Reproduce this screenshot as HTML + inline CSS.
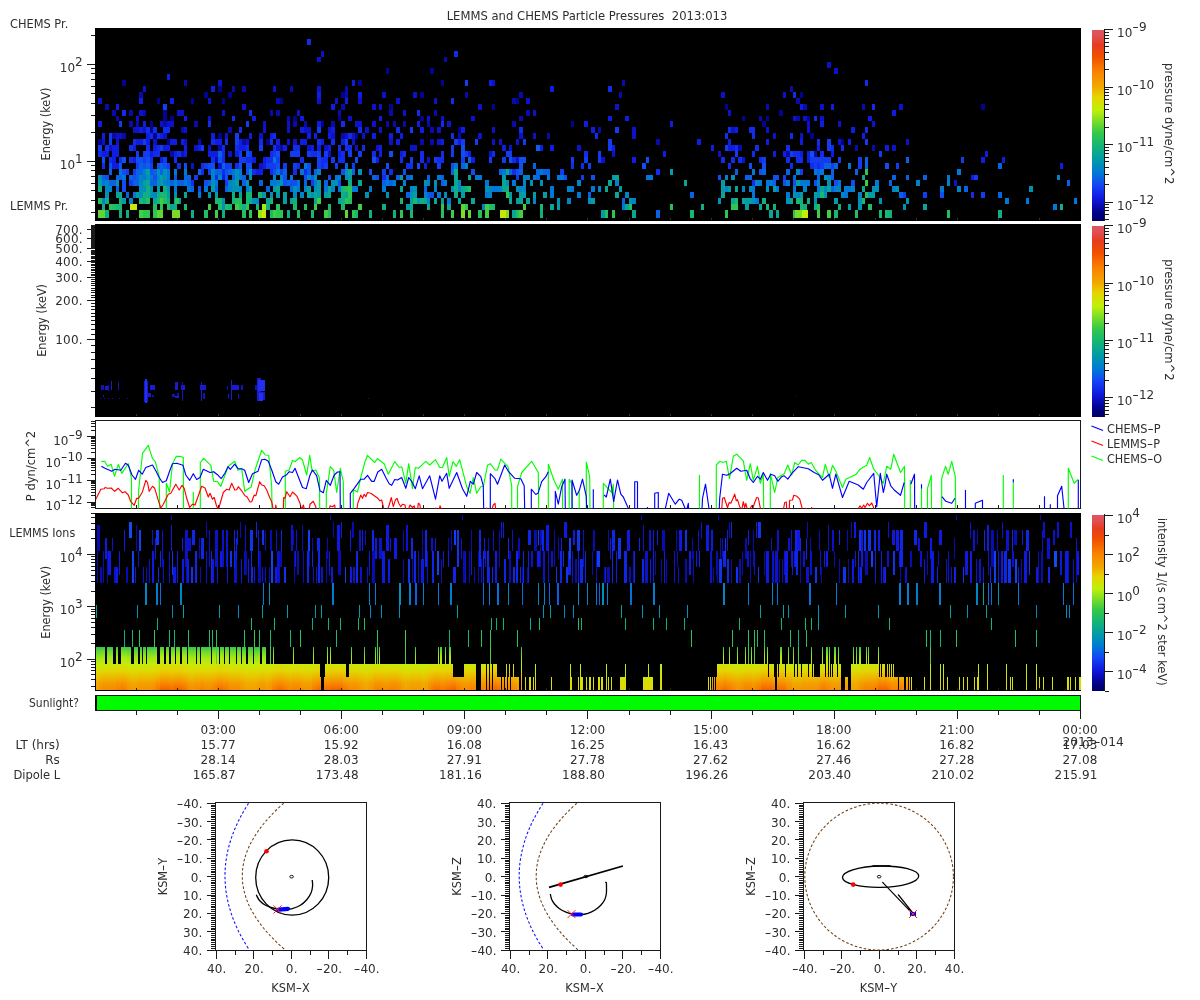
<!DOCTYPE html><html><head><meta charset="utf-8"><title>LEMMS and CHEMS Particle Pressures</title><style>html,body{margin:0;padding:0;background:#fff}svg{display:block;will-change:transform}</style></head><body><svg width="1200" height="1000" viewBox="0 0 1200 1000" font-family="'DejaVu Sans','Liberation Sans',sans-serif" shape-rendering="crispEdges">
<rect width="1200" height="1000" fill="#fff"/>
<defs><linearGradient id="cb" x1="0" y1="1" x2="0" y2="0"><stop offset="0.0" stop-color="#000064"/><stop offset="0.03" stop-color="#00007d"/><stop offset="0.06" stop-color="#05059b"/><stop offset="0.12" stop-color="#0f19e1"/><stop offset="0.19" stop-color="#1446f5"/><stop offset="0.25" stop-color="#0078d7"/><stop offset="0.31" stop-color="#0096af"/><stop offset="0.39" stop-color="#14b478"/><stop offset="0.46" stop-color="#32c84b"/><stop offset="0.52" stop-color="#78dc28"/><stop offset="0.58" stop-color="#bef00a"/><stop offset="0.65" stop-color="#e6d400"/><stop offset="0.7" stop-color="#f0aa00"/><stop offset="0.78" stop-color="#fa8200"/><stop offset="0.86" stop-color="#f05000"/><stop offset="0.92" stop-color="#e63c1e"/><stop offset="0.97" stop-color="#e05055"/><stop offset="1.0" stop-color="#de555f"/></linearGradient></defs>
<text transform="translate(587 20) scale(0.968 1)" font-size="12" text-anchor="middle" fill="#2e2e2e">LEMMS and CHEMS Particle Pressures &#160;2013:013</text>
<rect x="95" y="28" width="986" height="193" fill="#000"/>
<path d="M98 139h4v6h-4zM122 80h4v6h-4zM150 127h3v6h-3zM150 121h3v6h-3zM153 133h4v6h-4zM157 98h3v6h-3zM163 116h4v5h-4zM163 110h4v6h-4zM167 139h3v6h-3zM170 116h4v5h-4zM191 98h3v6h-3zM204 92h4v6h-4zM218 133h4v6h-4zM218 86h4v6h-4zM222 98h3v6h-3zM228 92h4v6h-4zM266 139h4v6h-4zM280 98h3v6h-3zM293 116h4v5h-4zM321 121h3v6h-3zM338 116h3v5h-3zM341 92h4v6h-4zM355 133h3v6h-3zM358 80h4v6h-4zM386 68h3v6h-3zM389 104h4v6h-4zM420 116h4v5h-4zM420 92h4v6h-4zM430 68h4v6h-4zM441 80h3v6h-3zM458 127h3v6h-3zM492 104h3v6h-3zM516 98h3v6h-3zM571 121h3v6h-3zM725 104h3v6h-3zM742 116h3v5h-3zM762 121h4v6h-4zM766 116h3v5h-3zM779 110h4v6h-4zM800 92h3v6h-3zM807 116h3v5h-3zM810 133h4v6h-4zM841 139h3v6h-3zM981 104h4v6h-4z" fill="#030391"/><path d="M105 104h4v6h-4zM112 133h4v6h-4zM112 110h4v6h-4zM116 116h3v5h-3zM122 133h4v6h-4zM129 121h4v6h-4zM129 110h4v6h-4zM136 121h3v6h-3zM139 92h4v6h-4zM143 110h3v6h-3zM163 121h4v6h-4zM170 151h4v6h-4zM181 127h3v6h-3zM184 80h3v6h-3zM194 121h4v6h-4zM198 139h3v6h-3zM215 157h3v6h-3zM218 145h4v6h-4zM228 127h4v6h-4zM232 86h3v6h-3zM242 139h4v6h-4zM242 86h4v6h-4zM270 110h3v6h-3zM276 110h4v6h-4zM276 98h4v6h-4zM280 145h3v6h-3zM287 116h3v5h-3zM290 86h3v6h-3zM293 121h4v6h-4zM304 121h3v6h-3zM331 121h4v6h-4zM338 110h3v6h-3zM341 133h4v6h-4zM341 104h4v6h-4zM345 92h3v6h-3zM345 86h3v6h-3zM386 121h3v6h-3zM389 110h4v6h-4zM393 121h3v6h-3zM403 121h3v6h-3zM420 139h4v6h-4zM427 121h3v6h-3zM430 139h4v6h-4zM430 127h4v6h-4zM434 110h3v6h-3zM444 57h3v5h-3zM458 133h3v6h-3zM465 92h3v6h-3zM512 121h4v6h-4zM512 98h4v6h-4zM519 116h4v5h-4zM519 92h4v6h-4zM526 110h4v6h-4zM547 133h3v6h-3zM598 127h3v6h-3zM619 92h3v6h-3zM622 80h3v6h-3zM656 139h4v6h-4zM738 145h4v6h-4zM759 116h3v5h-3zM766 104h3v6h-3zM786 151h4v6h-4zM790 86h3v6h-3zM796 116h4v5h-4zM796 98h4v6h-4zM803 104h4v6h-4zM814 151h3v6h-3zM855 145h3v6h-3zM862 104h3v6h-3zM872 145h3v6h-3z" fill="#080aac"/><path d="M98 98h4v6h-4zM102 139h3v6h-3zM109 145h3v6h-3zM116 139h3v6h-3zM116 133h3v6h-3zM119 133h3v6h-3zM133 127h3v6h-3zM136 127h3v6h-3zM136 116h3v5h-3zM139 110h4v6h-4zM143 127h3v6h-3zM143 86h3v6h-3zM153 139h4v6h-4zM160 121h3v6h-3zM163 133h4v6h-4zM167 121h3v6h-3zM170 121h4v6h-4zM177 110h4v6h-4zM181 151h3v6h-3zM181 110h3v6h-3zM184 139h3v6h-3zM184 127h3v6h-3zM191 163h3v6h-3zM194 145h4v6h-4zM208 145h3v6h-3zM208 116h3v5h-3zM208 98h3v6h-3zM218 163h4v6h-4zM218 80h4v6h-4zM222 110h3v6h-3zM225 133h3v6h-3zM228 151h4v6h-4zM242 104h4v6h-4zM246 139h3v6h-3zM259 163h4v6h-4zM259 133h4v6h-4zM263 127h3v6h-3zM263 121h3v6h-3zM273 86h3v6h-3zM276 145h4v6h-4zM287 139h3v6h-3zM287 127h3v6h-3zM287 121h3v6h-3zM293 139h4v6h-4zM297 110h3v6h-3zM304 127h3v6h-3zM307 145h4v6h-4zM307 127h4v6h-4zM317 98h4v6h-4zM317 86h4v6h-4zM317 57h4v5h-4zM321 51h3v6h-3zM324 145h4v6h-4zM328 151h3v6h-3zM328 127h3v6h-3zM331 133h4v6h-4zM335 98h3v6h-3zM345 133h3v6h-3zM348 116h4v5h-4zM352 139h3v6h-3zM352 133h3v6h-3zM355 145h3v6h-3zM355 121h3v6h-3zM358 121h4v6h-4zM358 98h4v6h-4zM362 133h3v6h-3zM365 127h4v6h-4zM372 121h4v6h-4zM372 104h4v6h-4zM376 145h3v6h-3zM379 127h3v6h-3zM379 104h3v6h-3zM382 92h4v6h-4zM389 139h4v6h-4zM396 98h4v6h-4zM403 110h3v6h-3zM410 145h3v6h-3zM413 145h4v6h-4zM413 92h4v6h-4zM427 157h3v6h-3zM427 116h3v5h-3zM434 98h3v6h-3zM437 139h4v6h-4zM437 127h4v6h-4zM441 116h3v5h-3zM447 121h4v6h-4zM471 116h4v5h-4zM478 133h4v6h-4zM478 104h4v6h-4zM489 151h3v6h-3zM492 139h3v6h-3zM492 127h3v6h-3zM492 80h3v6h-3zM499 139h3v6h-3zM509 145h3v6h-3zM516 157h3v6h-3zM516 139h3v6h-3zM519 133h4v6h-4zM526 98h4v6h-4zM533 133h3v6h-3zM533 110h3v6h-3zM577 145h4v6h-4zM601 157h4v6h-4zM612 151h3v6h-3zM615 104h4v6h-4zM632 133h4v6h-4zM632 127h4v6h-4zM718 151h3v6h-3zM721 92h4v6h-4zM728 110h3v6h-3zM731 127h4v6h-4zM742 157h3v6h-3zM766 127h3v6h-3zM773 133h3v6h-3zM783 92h3v6h-3zM793 116h3v5h-3zM800 133h3v6h-3zM803 116h4v5h-4zM807 127h3v6h-3zM807 121h3v6h-3zM820 116h4v5h-4zM820 104h4v6h-4zM827 62h4v6h-4zM834 68h4v6h-4zM838 139h3v6h-3zM838 121h3v6h-3zM872 121h3v6h-3zM892 145h4v6h-4zM899 104h4v6h-4zM906 139h3v6h-3zM954 180h3v6h-3z" fill="#0c12ca"/><path d="M98 121h4v6h-4zM102 151h3v6h-3zM102 133h3v6h-3zM105 151h4v6h-4zM112 163h4v6h-4zM112 157h4v6h-4zM112 151h4v6h-4zM112 145h4v6h-4zM116 163h3v6h-3zM116 151h3v6h-3zM116 145h3v6h-3zM116 104h3v6h-3zM133 157h3v6h-3zM133 145h3v6h-3zM136 139h3v6h-3zM139 139h4v6h-4zM139 127h4v6h-4zM139 98h4v6h-4zM143 121h3v6h-3zM146 139h4v6h-4zM146 133h4v6h-4zM150 151h3v6h-3zM153 145h4v6h-4zM160 157h3v6h-3zM160 133h3v6h-3zM163 145h4v6h-4zM167 145h3v6h-3zM167 74h3v6h-3zM170 139h4v6h-4zM170 98h4v6h-4zM174 151h3v6h-3zM174 139h3v6h-3zM181 139h3v6h-3zM184 151h3v6h-3zM184 145h3v6h-3zM184 116h3v5h-3zM198 145h3v6h-3zM208 151h3v6h-3zM211 151h4v6h-4zM211 133h4v6h-4zM211 86h4v6h-4zM215 151h3v6h-3zM215 139h3v6h-3zM218 139h4v6h-4zM222 175h3v5h-3zM235 151h4v6h-4zM239 145h3v6h-3zM239 139h3v6h-3zM242 145h4v6h-4zM249 133h3v6h-3zM252 157h4v6h-4zM252 116h4v5h-4zM256 169h3v6h-3zM259 169h4v6h-4zM263 163h3v6h-3zM263 157h3v6h-3zM270 133h3v6h-3zM276 139h4v6h-4zM283 145h4v6h-4zM300 139h4v6h-4zM300 127h4v6h-4zM300 116h4v5h-4zM304 139h3v6h-3zM307 133h4v6h-4zM311 145h3v6h-3zM314 133h3v6h-3zM317 145h4v6h-4zM317 121h4v6h-4zM317 92h4v6h-4zM321 139h3v6h-3zM328 145h3v6h-3zM328 133h3v6h-3zM331 127h4v6h-4zM331 104h4v6h-4zM338 151h3v6h-3zM341 139h4v6h-4zM345 98h3v6h-3zM352 80h3v6h-3zM358 92h4v6h-4zM372 133h4v6h-4zM376 157h3v6h-3zM379 151h3v6h-3zM379 145h3v6h-3zM379 116h3v5h-3zM389 133h4v6h-4zM396 139h4v6h-4zM400 151h3v6h-3zM400 133h3v6h-3zM417 121h3v6h-3zM420 127h4v6h-4zM424 163h3v6h-3zM441 139h3v6h-3zM458 139h3v6h-3zM461 127h4v6h-4zM468 151h3v6h-3zM471 157h4v6h-4zM489 80h3v6h-3zM502 145h4v6h-4zM540 145h3v6h-3zM550 145h4v6h-4zM550 86h4v6h-4zM584 121h4v6h-4zM591 127h4v6h-4zM608 116h4v5h-4zM612 145h3v6h-3zM625 116h4v5h-4zM632 157h4v6h-4zM663 151h3v6h-3zM670 121h3v6h-3zM697 139h4v6h-4zM711 145h3v6h-3zM728 145h3v6h-3zM728 139h3v6h-3zM731 145h4v6h-4zM735 127h3v6h-3zM766 139h3v6h-3zM773 151h3v6h-3zM783 151h3v6h-3zM800 151h3v6h-3zM800 139h3v6h-3zM800 104h3v6h-3zM807 157h3v6h-3zM807 151h3v6h-3zM817 145h3v6h-3zM820 121h4v6h-4zM831 151h3v6h-3zM831 104h3v6h-3zM848 139h3v6h-3zM851 127h4v6h-4zM862 133h3v6h-3zM868 116h4v5h-4zM885 145h4v6h-4zM892 110h4v6h-4zM971 175h3v5h-3zM981 157h4v6h-4zM985 151h3v6h-3zM1002 157h3v6h-3zM1060 163h3v6h-3z" fill="#0f1ce2"/><path d="M98 151h4v6h-4zM102 163h3v6h-3zM105 145h4v6h-4zM109 157h3v6h-3zM119 157h3v6h-3zM122 110h4v6h-4zM129 157h4v6h-4zM129 145h4v6h-4zM133 139h3v6h-3zM146 145h4v6h-4zM146 127h4v6h-4zM150 157h3v6h-3zM150 133h3v6h-3zM153 151h4v6h-4zM153 127h4v6h-4zM157 151h3v6h-3zM157 145h3v6h-3zM157 133h3v6h-3zM163 127h4v6h-4zM167 127h3v6h-3zM174 157h3v6h-3zM177 163h4v6h-4zM177 151h4v6h-4zM191 180h3v6h-3zM201 169h3v6h-3zM201 163h3v6h-3zM208 121h3v6h-3zM211 157h4v6h-4zM211 139h4v6h-4zM215 175h3v5h-3zM222 169h3v6h-3zM222 157h3v6h-3zM222 151h3v6h-3zM222 145h3v6h-3zM225 139h3v6h-3zM232 116h3v5h-3zM235 163h4v6h-4zM235 145h4v6h-4zM239 127h3v6h-3zM246 157h3v6h-3zM246 145h3v6h-3zM249 157h3v6h-3zM249 110h3v6h-3zM252 169h4v6h-4zM259 139h4v6h-4zM266 157h4v6h-4zM270 169h3v6h-3zM270 157h3v6h-3zM270 151h3v6h-3zM270 139h3v6h-3zM273 145h3v6h-3zM273 133h3v6h-3zM293 169h4v6h-4zM293 145h4v6h-4zM297 163h3v6h-3zM297 145h3v6h-3zM300 157h4v6h-4zM304 169h3v6h-3zM307 39h4v6h-4zM311 151h3v6h-3zM314 151h3v6h-3zM317 139h4v6h-4zM321 163h3v6h-3zM321 157h3v6h-3zM324 157h4v6h-4zM331 139h4v6h-4zM338 157h3v6h-3zM338 145h3v6h-3zM341 157h4v6h-4zM341 151h4v6h-4zM341 121h4v6h-4zM345 145h3v6h-3zM348 145h4v6h-4zM348 133h4v6h-4zM358 127h4v6h-4zM362 145h3v6h-3zM372 151h4v6h-4zM382 175h4v5h-4zM389 169h4v6h-4zM396 127h4v6h-4zM400 157h3v6h-3zM403 151h3v6h-3zM406 163h4v6h-4zM410 163h3v6h-3zM417 110h3v6h-3zM420 157h4v6h-4zM420 151h4v6h-4zM437 157h4v6h-4zM441 157h3v6h-3zM441 151h3v6h-3zM441 121h3v6h-3zM451 133h3v6h-3zM451 98h3v6h-3zM454 51h4v6h-4zM492 151h3v6h-3zM512 169h4v6h-4zM512 157h4v6h-4zM519 127h4v6h-4zM571 163h3v6h-3zM581 163h3v6h-3zM584 151h4v6h-4zM595 133h3v6h-3zM608 86h4v6h-4zM656 169h4v6h-4zM721 157h4v6h-4zM725 133h3v6h-3zM728 163h3v6h-3zM728 127h3v6h-3zM731 157h4v6h-4zM735 145h3v6h-3zM738 157h4v6h-4zM749 127h3v6h-3zM752 180h3v6h-3zM752 151h3v6h-3zM752 133h3v6h-3zM752 127h3v6h-3zM755 145h4v6h-4zM759 157h3v6h-3zM786 157h4v6h-4zM786 145h4v6h-4zM790 163h3v6h-3zM790 133h3v6h-3zM793 151h3v6h-3zM793 92h3v6h-3zM796 157h4v6h-4zM796 151h4v6h-4zM800 157h3v6h-3zM810 163h4v6h-4zM814 116h3v5h-3zM817 163h3v6h-3zM817 139h3v6h-3zM820 151h4v6h-4zM831 145h3v6h-3zM841 145h3v6h-3zM865 127h3v6h-3zM865 80h3v6h-3zM872 104h3v6h-3zM971 192h3v6h-3z" fill="#112cea"/><path d="M98 145h4v6h-4zM109 139h3v6h-3zM109 133h3v6h-3zM119 121h3v6h-3zM126 169h3v6h-3zM129 180h4v6h-4zM133 169h3v6h-3zM136 163h3v6h-3zM136 151h3v6h-3zM143 157h3v6h-3zM143 151h3v6h-3zM143 139h3v6h-3zM146 151h4v6h-4zM150 163h3v6h-3zM160 145h3v6h-3zM163 157h4v6h-4zM163 104h4v6h-4zM167 163h3v6h-3zM194 175h4v5h-4zM201 145h3v6h-3zM204 163h4v6h-4zM208 169h3v6h-3zM225 180h3v6h-3zM225 163h3v6h-3zM228 163h4v6h-4zM235 139h4v6h-4zM235 133h4v6h-4zM239 157h3v6h-3zM239 151h3v6h-3zM242 157h4v6h-4zM246 121h3v6h-3zM249 151h3v6h-3zM259 145h4v6h-4zM266 163h4v6h-4zM270 163h3v6h-3zM273 163h3v6h-3zM273 151h3v6h-3zM276 157h4v6h-4zM280 169h3v6h-3zM283 163h4v6h-4zM290 151h3v6h-3zM293 163h4v6h-4zM293 151h4v6h-4zM297 151h3v6h-3zM307 151h4v6h-4zM311 180h3v6h-3zM317 163h4v6h-4zM317 157h4v6h-4zM317 151h4v6h-4zM317 127h4v6h-4zM324 163h4v6h-4zM324 151h4v6h-4zM331 157h4v6h-4zM335 163h3v6h-3zM345 139h3v6h-3zM348 151h4v6h-4zM352 163h3v6h-3zM358 151h4v6h-4zM382 169h4v6h-4zM410 157h3v6h-3zM410 127h3v6h-3zM434 157h3v6h-3zM437 163h4v6h-4zM451 151h3v6h-3zM451 145h3v6h-3zM454 139h4v6h-4zM461 157h4v6h-4zM461 139h4v6h-4zM465 151h3v6h-3zM465 80h3v6h-3zM475 139h3v6h-3zM489 157h3v6h-3zM502 157h4v6h-4zM506 151h3v6h-3zM509 151h3v6h-3zM516 175h3v5h-3zM523 139h3v6h-3zM560 169h4v6h-4zM571 157h3v6h-3zM581 175h3v5h-3zM584 157h4v6h-4zM588 163h3v6h-3zM598 157h3v6h-3zM598 151h3v6h-3zM608 145h4v6h-4zM608 139h4v6h-4zM615 127h4v6h-4zM725 145h3v6h-3zM735 151h3v6h-3zM762 157h4v6h-4zM783 175h3v5h-3zM790 151h3v6h-3zM800 169h3v6h-3zM810 157h4v6h-4zM814 163h3v6h-3zM814 157h3v6h-3zM817 157h3v6h-3zM820 163h4v6h-4zM820 157h4v6h-4zM824 157h3v6h-3zM827 157h4v6h-4zM827 145h4v6h-4zM827 139h4v6h-4zM831 163h3v6h-3zM838 157h3v6h-3zM858 163h4v6h-4zM858 157h4v6h-4zM865 139h3v6h-3zM879 151h3v6h-3zM896 163h3v6h-3zM903 192h3v6h-3zM923 192h4v6h-4zM961 157h3v6h-3zM974 175h4v5h-4zM981 192h4v6h-4z" fill="#133cf1"/><path d="M102 157h3v6h-3zM105 175h4v5h-4zM109 163h3v6h-3zM119 163h3v6h-3zM122 186h4v6h-4zM122 180h4v6h-4zM122 169h4v6h-4zM122 157h4v6h-4zM133 175h3v5h-3zM136 157h3v6h-3zM139 157h4v6h-4zM143 163h3v6h-3zM146 157h4v6h-4zM150 169h3v6h-3zM153 175h4v5h-4zM157 163h3v6h-3zM163 163h4v6h-4zM174 175h3v5h-3zM184 163h3v6h-3zM198 186h3v6h-3zM204 180h4v6h-4zM208 163h3v6h-3zM211 163h4v6h-4zM218 157h4v6h-4zM225 175h3v5h-3zM225 169h3v6h-3zM239 163h3v6h-3zM246 169h3v6h-3zM246 163h3v6h-3zM246 151h3v6h-3zM249 163h3v6h-3zM273 169h3v6h-3zM276 163h4v6h-4zM276 151h4v6h-4zM283 180h4v6h-4zM283 175h4v5h-4zM290 180h3v6h-3zM293 180h4v6h-4zM304 175h3v5h-3zM307 169h4v6h-4zM307 163h4v6h-4zM328 175h3v5h-3zM338 180h3v6h-3zM341 169h4v6h-4zM355 157h3v6h-3zM369 169h3v6h-3zM372 157h4v6h-4zM376 175h3v5h-3zM386 163h3v6h-3zM389 151h4v6h-4zM403 169h3v6h-3zM417 163h3v6h-3zM430 192h4v6h-4zM451 163h3v6h-3zM461 151h4v6h-4zM461 145h4v6h-4zM471 169h4v6h-4zM509 157h3v6h-3zM516 169h3v6h-3zM519 163h4v6h-4zM519 157h4v6h-4zM523 157h3v6h-3zM564 175h3v5h-3zM591 175h4v5h-4zM642 163h4v6h-4zM646 157h3v6h-3zM718 175h3v5h-3zM749 163h3v6h-3zM759 169h3v6h-3zM762 163h4v6h-4zM773 175h3v5h-3zM776 175h3v5h-3zM783 180h3v6h-3zM793 180h3v6h-3zM810 151h4v6h-4zM814 180h3v6h-3zM834 180h4v6h-4zM851 180h4v6h-4zM885 163h4v6h-4zM940 192h4v6h-4z" fill="#114ef0"/><path d="M102 175h3v5h-3zM109 180h3v6h-3zM109 169h3v6h-3zM112 180h4v6h-4zM116 186h3v6h-3zM116 175h3v5h-3zM119 175h3v5h-3zM126 192h3v6h-3zM129 175h4v5h-4zM133 180h3v6h-3zM136 180h3v6h-3zM136 175h3v5h-3zM136 169h3v6h-3zM139 169h4v6h-4zM139 163h4v6h-4zM146 163h4v6h-4zM150 180h3v6h-3zM153 180h4v6h-4zM153 169h4v6h-4zM160 169h3v6h-3zM160 163h3v6h-3zM170 180h4v6h-4zM177 180h4v6h-4zM181 180h3v6h-3zM184 175h3v5h-3zM187 180h4v6h-4zM187 175h4v5h-4zM191 186h3v6h-3zM198 169h3v6h-3zM208 180h3v6h-3zM215 186h3v6h-3zM215 169h3v6h-3zM218 169h4v6h-4zM218 151h4v6h-4zM222 163h3v6h-3zM225 186h3v6h-3zM228 169h4v6h-4zM232 175h3v5h-3zM242 180h4v6h-4zM242 175h4v5h-4zM259 180h4v6h-4zM266 186h4v6h-4zM283 169h4v6h-4zM287 180h3v6h-3zM290 186h3v6h-3zM304 180h3v6h-3zM311 175h3v5h-3zM314 169h3v6h-3zM324 180h4v6h-4zM345 163h3v6h-3zM352 169h3v6h-3zM372 175h4v5h-4zM382 180h4v6h-4zM386 175h3v5h-3zM389 180h4v6h-4zM396 175h4v5h-4zM406 192h4v6h-4zM406 175h4v5h-4zM424 186h3v6h-3zM427 192h3v6h-3zM427 175h3v5h-3zM441 180h3v6h-3zM441 175h3v5h-3zM451 169h3v6h-3zM461 163h4v6h-4zM468 157h3v6h-3zM499 169h3v6h-3zM509 169h3v6h-3zM519 169h4v6h-4zM533 163h3v6h-3zM536 175h4v5h-4zM536 169h4v6h-4zM536 145h4v6h-4zM543 169h4v6h-4zM547 169h3v6h-3zM588 192h3v6h-3zM622 198h3v6h-3zM656 210h4v8h-4zM690 192h4v6h-4zM735 169h3v6h-3zM745 175h4v5h-4zM749 175h3v5h-3zM762 169h4v6h-4zM773 180h3v6h-3zM786 169h4v6h-4zM793 175h3v5h-3zM817 175h3v5h-3zM817 169h3v6h-3zM824 163h3v6h-3zM827 163h4v6h-4zM831 186h3v6h-3zM831 175h3v5h-3zM831 169h3v6h-3zM834 163h4v6h-4zM855 169h3v6h-3zM865 163h3v6h-3zM865 157h3v6h-3zM889 180h3v6h-3zM892 175h4v5h-4zM899 192h4v6h-4zM906 175h3v5h-3zM906 157h3v6h-3zM923 175h4v5h-4zM964 186h4v6h-4zM998 192h4v6h-4zM998 163h4v6h-4zM1067 180h3v6h-3z" fill="#0863e4"/><path d="M102 180h3v6h-3zM119 169h3v6h-3zM122 175h4v5h-4zM133 192h3v6h-3zM143 175h3v5h-3zM150 175h3v5h-3zM167 180h3v6h-3zM167 175h3v5h-3zM167 169h3v6h-3zM174 186h3v6h-3zM174 169h3v6h-3zM184 180h3v6h-3zM184 169h3v6h-3zM187 186h4v6h-4zM198 192h3v6h-3zM204 186h4v6h-4zM215 180h3v6h-3zM232 169h3v6h-3zM239 175h3v5h-3zM239 169h3v6h-3zM246 186h3v6h-3zM270 180h3v6h-3zM273 180h3v6h-3zM273 157h3v6h-3zM276 169h4v6h-4zM290 175h3v5h-3zM297 186h3v6h-3zM297 180h3v6h-3zM300 169h4v6h-4zM304 163h3v6h-3zM314 180h3v6h-3zM324 186h4v6h-4zM335 175h3v5h-3zM338 186h3v6h-3zM352 186h3v6h-3zM355 186h3v6h-3zM369 186h3v6h-3zM382 186h4v6h-4zM386 180h3v6h-3zM393 180h3v6h-3zM410 175h3v5h-3zM437 192h4v6h-4zM437 175h4v5h-4zM444 180h3v6h-3zM447 198h4v6h-4zM454 163h4v6h-4zM475 175h3v5h-3zM478 175h4v5h-4zM485 192h4v6h-4zM485 180h4v6h-4zM492 186h3v6h-3zM495 186h4v6h-4zM502 169h4v6h-4zM512 180h4v6h-4zM533 175h3v5h-3zM540 169h3v6h-3zM547 175h3v5h-3zM550 192h4v6h-4zM550 186h4v6h-4zM557 175h3v5h-3zM560 175h4v5h-4zM571 186h3v6h-3zM577 192h4v6h-4zM591 186h4v6h-4zM622 204h3v6h-3zM646 175h3v5h-3zM649 175h4v5h-4zM752 192h3v6h-3zM752 186h3v6h-3zM752 169h3v6h-3zM755 198h4v6h-4zM759 180h3v6h-3zM766 180h3v6h-3zM769 180h4v6h-4zM776 186h3v6h-3zM786 192h4v6h-4zM786 180h4v6h-4zM793 186h3v6h-3zM800 180h3v6h-3zM803 180h4v6h-4zM807 180h3v6h-3zM814 169h3v6h-3zM817 186h3v6h-3zM820 169h4v6h-4zM838 180h3v6h-3zM844 192h4v6h-4zM844 186h4v6h-4zM848 186h3v6h-3zM848 163h3v6h-3zM875 180h4v6h-4zM940 186h4v6h-4zM947 175h3v5h-3zM957 169h4v6h-4zM1005 198h4v6h-4zM1026 198h3v6h-3zM1053 204h4v6h-4zM1074 198h3v6h-3z" fill="#0078d7"/><path d="M102 198h3v6h-3zM105 186h4v6h-4zM105 180h4v6h-4zM109 186h3v6h-3zM129 198h4v6h-4zM139 180h4v6h-4zM139 175h4v5h-4zM143 169h3v6h-3zM153 192h4v6h-4zM157 175h3v5h-3zM163 180h4v6h-4zM174 180h3v6h-3zM211 175h4v5h-4zM211 169h4v6h-4zM218 175h4v5h-4zM228 186h4v6h-4zM228 180h4v6h-4zM239 186h3v6h-3zM256 198h3v6h-3zM259 192h4v6h-4zM273 175h3v5h-3zM276 180h4v6h-4zM280 175h3v5h-3zM293 192h4v6h-4zM300 192h4v6h-4zM304 186h3v6h-3zM307 175h4v5h-4zM317 169h4v6h-4zM331 186h4v6h-4zM338 175h3v5h-3zM403 180h3v6h-3zM410 186h3v6h-3zM424 192h3v6h-3zM427 198h3v6h-3zM427 180h3v6h-3zM434 186h3v6h-3zM458 186h3v6h-3zM458 180h3v6h-3zM465 163h3v6h-3zM482 204h3v6h-3zM489 192h3v6h-3zM489 186h3v6h-3zM499 186h3v6h-3zM519 186h4v6h-4zM523 186h3v6h-3zM523 180h3v6h-3zM523 175h3v5h-3zM526 175h4v5h-4zM533 198h3v6h-3zM567 198h4v6h-4zM567 186h4v6h-4zM577 180h4v6h-4zM598 186h3v6h-3zM615 180h4v6h-4zM625 192h4v6h-4zM632 198h4v6h-4zM725 186h3v6h-3zM725 175h3v5h-3zM742 186h3v6h-3zM749 186h3v6h-3zM755 180h4v6h-4zM796 192h4v6h-4zM796 169h4v6h-4zM803 186h4v6h-4zM817 180h3v6h-3zM824 186h3v6h-3zM827 175h4v5h-4zM834 186h4v6h-4zM838 186h3v6h-3zM841 192h3v6h-3zM851 186h4v6h-4zM858 192h4v6h-4zM892 186h4v6h-4zM916 180h4v6h-4zM947 180h3v6h-3zM957 186h4v6h-4zM1057 175h3v5h-3z" fill="#0084c6"/><path d="M98 175h4v5h-4zM105 192h4v6h-4zM116 180h3v6h-3zM139 192h4v6h-4zM139 186h4v6h-4zM143 186h3v6h-3zM146 175h4v5h-4zM150 192h3v6h-3zM150 186h3v6h-3zM157 180h3v6h-3zM157 169h3v6h-3zM163 175h4v5h-4zM163 169h4v6h-4zM167 186h3v6h-3zM174 192h3v6h-3zM208 192h3v6h-3zM211 180h4v6h-4zM222 204h3v6h-3zM222 198h3v6h-3zM232 186h3v6h-3zM232 180h3v6h-3zM235 186h4v6h-4zM235 175h4v5h-4zM235 169h4v6h-4zM246 180h3v6h-3zM249 175h3v5h-3zM249 169h3v6h-3zM252 198h4v6h-4zM270 192h3v6h-3zM280 180h3v6h-3zM293 186h4v6h-4zM311 192h3v6h-3zM314 186h3v6h-3zM314 175h3v5h-3zM331 180h4v6h-4zM335 180h3v6h-3zM345 175h3v5h-3zM345 169h3v6h-3zM358 169h4v6h-4zM365 192h4v6h-4zM386 192h3v6h-3zM410 192h3v6h-3zM413 186h4v6h-4zM424 180h3v6h-3zM434 180h3v6h-3zM444 192h3v6h-3zM451 186h3v6h-3zM485 186h4v6h-4zM506 180h3v6h-3zM516 186h3v6h-3zM530 180h3v6h-3zM540 180h3v6h-3zM557 198h3v6h-3zM588 198h3v6h-3zM629 198h3v6h-3zM718 198h3v6h-3zM731 175h4v5h-4zM752 198h3v6h-3zM766 186h3v6h-3zM786 198h4v6h-4zM793 192h3v6h-3zM814 198h3v6h-3zM817 192h3v6h-3zM824 192h3v6h-3zM824 175h3v5h-3zM827 180h4v6h-4zM858 204h4v6h-4zM858 198h4v6h-4zM872 186h3v6h-3zM875 186h4v6h-4zM879 198h3v6h-3zM896 186h3v6h-3zM903 204h3v6h-3zM906 198h3v6h-3zM1029 186h4v6h-4z" fill="#0091b6"/><path d="M98 180h4v6h-4zM122 198h4v6h-4zM136 192h3v6h-3zM143 180h3v6h-3zM146 169h4v6h-4zM157 186h3v6h-3zM160 180h3v6h-3zM160 175h3v5h-3zM167 192h3v6h-3zM174 198h3v6h-3zM177 198h4v6h-4zM211 186h4v6h-4zM215 192h3v6h-3zM235 180h4v6h-4zM249 186h3v6h-3zM263 192h3v6h-3zM273 186h3v6h-3zM276 192h4v6h-4zM283 198h4v6h-4zM283 192h4v6h-4zM307 186h4v6h-4zM317 192h4v6h-4zM317 186h4v6h-4zM317 180h4v6h-4zM324 192h4v6h-4zM348 175h4v5h-4zM400 175h3v5h-3zM406 204h4v6h-4zM410 198h3v6h-3zM413 192h4v6h-4zM417 198h3v6h-3zM441 198h3v6h-3zM461 192h4v6h-4zM502 175h4v5h-4zM509 192h3v6h-3zM516 198h3v6h-3zM519 192h4v6h-4zM523 192h3v6h-3zM533 192h3v6h-3zM543 192h4v6h-4zM557 204h3v6h-3zM591 198h4v6h-4zM601 210h4v8h-4zM612 175h3v5h-3zM619 186h3v6h-3zM670 169h3v6h-3zM721 186h4v6h-4zM721 180h4v6h-4zM728 186h3v6h-3zM745 204h4v6h-4zM745 198h4v6h-4zM749 198h3v6h-3zM773 186h3v6h-3zM796 180h4v6h-4zM800 192h3v6h-3zM814 192h3v6h-3zM834 198h4v6h-4zM848 204h3v6h-3zM868 192h4v6h-4zM872 192h3v6h-3z" fill="#049ca5"/><path d="M116 192h3v6h-3zM119 192h3v6h-3zM146 180h4v6h-4zM153 198h4v6h-4zM170 204h4v6h-4zM184 192h3v6h-3zM239 192h3v6h-3zM266 198h4v6h-4zM276 186h4v6h-4zM290 198h3v6h-3zM307 192h4v6h-4zM314 198h3v6h-3zM314 192h3v6h-3zM328 192h3v6h-3zM328 186h3v6h-3zM338 198h3v6h-3zM345 192h3v6h-3zM348 169h4v6h-4zM358 180h4v6h-4zM400 186h3v6h-3zM410 204h3v6h-3zM424 198h3v6h-3zM427 204h3v6h-3zM434 198h3v6h-3zM447 204h4v6h-4zM454 180h4v6h-4zM454 175h4v5h-4zM458 198h3v6h-3zM461 186h4v6h-4zM468 175h3v5h-3zM471 198h4v6h-4zM502 186h4v6h-4zM502 180h4v6h-4zM506 169h3v6h-3zM509 198h3v6h-3zM512 210h4v8h-4zM519 198h4v6h-4zM526 198h4v6h-4zM550 204h4v6h-4zM605 186h3v6h-3zM608 180h4v6h-4zM615 192h4v6h-4zM615 175h4v5h-4zM625 204h4v6h-4zM632 210h4v8h-4zM684 180h3v6h-3zM721 192h4v6h-4zM731 198h4v6h-4zM735 186h3v6h-3zM742 198h3v6h-3zM759 204h3v6h-3zM769 210h4v8h-4zM776 210h3v8h-3zM790 198h3v6h-3zM820 186h4v6h-4zM827 186h4v6h-4zM862 186h3v6h-3zM862 175h3v5h-3zM923 204h4v6h-4z" fill="#0aa594"/><path d="M98 186h4v6h-4zM102 204h3v6h-3zM105 210h4v8h-4zM105 198h4v6h-4zM119 210h3v8h-3zM119 198h3v6h-3zM126 210h3v8h-3zM143 198h3v6h-3zM143 192h3v6h-3zM146 192h4v6h-4zM146 186h4v6h-4zM157 192h3v6h-3zM163 186h4v6h-4zM167 198h3v6h-3zM174 204h3v6h-3zM191 210h3v8h-3zM222 210h3v8h-3zM232 192h3v6h-3zM242 204h4v6h-4zM249 198h3v6h-3zM266 204h4v6h-4zM287 210h3v8h-3zM293 198h4v6h-4zM341 198h4v6h-4zM341 192h4v6h-4zM348 180h4v6h-4zM369 210h3v8h-3zM382 204h4v6h-4zM393 210h3v8h-3zM420 198h4v6h-4zM454 192h4v6h-4zM454 186h4v6h-4zM454 169h4v6h-4zM465 186h3v6h-3zM506 186h3v6h-3zM540 210h3v8h-3zM701 204h3v6h-3zM762 198h4v6h-4zM773 204h3v6h-3zM800 198h3v6h-3zM803 204h4v6h-4zM807 198h3v6h-3zM814 204h3v6h-3zM838 204h3v6h-3zM889 210h3v8h-3zM998 210h4v8h-4zM1060 204h3v6h-3z" fill="#10ae82"/><path d="M116 204h3v6h-3zM119 204h3v6h-3zM139 198h4v6h-4zM157 198h3v6h-3zM160 192h3v6h-3zM163 192h4v6h-4zM184 204h3v6h-3zM215 198h3v6h-3zM218 198h4v6h-4zM228 204h4v6h-4zM232 198h3v6h-3zM246 198h3v6h-3zM246 192h3v6h-3zM249 192h3v6h-3zM256 204h3v6h-3zM270 210h3v8h-3zM270 198h3v6h-3zM293 204h4v6h-4zM311 210h3v8h-3zM328 204h3v6h-3zM341 204h4v6h-4zM341 186h4v6h-4zM355 210h3v8h-3zM400 198h3v6h-3zM410 210h3v8h-3zM413 198h4v6h-4zM492 204h3v6h-3zM540 204h3v6h-3zM690 210h4v8h-4zM735 198h3v6h-3zM766 204h3v6h-3zM796 198h4v6h-4zM800 204h3v6h-3zM820 192h4v6h-4zM834 210h4v8h-4zM862 198h3v6h-3zM879 210h3v8h-3zM885 210h4v8h-4zM258 192h4v6h-4z" fill="#18b772"/><path d="M98 198h4v6h-4z" fill="#21bd65"/><path d="M112 204h4v6h-4zM133 204h3v6h-3zM146 198h4v6h-4zM153 204h4v6h-4zM163 198h4v6h-4zM167 204h3v6h-3zM204 210h4v8h-4zM218 204h4v6h-4zM225 204h3v6h-3zM235 198h4v6h-4zM239 204h3v6h-3zM239 198h3v6h-3zM242 210h4v8h-4zM297 210h3v8h-3zM304 204h3v6h-3zM328 210h3v8h-3zM345 186h3v6h-3zM348 198h4v6h-4zM441 210h3v8h-3zM468 186h3v6h-3zM478 210h4v8h-4zM489 204h3v6h-3zM516 210h3v8h-3zM605 210h3v8h-3zM629 204h3v6h-3zM670 204h3v6h-3zM793 210h3v8h-3zM817 204h3v6h-3zM855 210h3v8h-3zM865 192h3v6h-3zM868 204h4v6h-4zM947 210h3v8h-3z" fill="#23be62"/><path d="M109 204h3v6h-3zM143 210h3v8h-3zM146 210h4v8h-4zM153 210h4v8h-4zM160 204h3v6h-3zM246 204h3v6h-3zM249 210h3v8h-3zM276 210h4v8h-4zM276 204h4v6h-4zM280 210h3v8h-3zM345 198h3v6h-3zM348 192h4v6h-4zM348 186h4v6h-4zM352 210h3v8h-3zM400 210h3v8h-3zM441 204h3v6h-3zM465 204h3v6h-3zM506 192h3v6h-3zM612 210h3v8h-3zM725 210h3v8h-3zM731 204h4v6h-4zM735 204h3v6h-3zM865 169h3v6h-3zM175 198h4v6h-4z" fill="#2ec551"/><path d="M98 210h4v8h-4zM139 210h4v8h-4zM160 198h3v6h-3zM208 204h3v6h-3zM215 210h3v8h-3zM235 204h4v6h-4zM273 210h3v8h-3zM314 204h3v6h-3zM317 198h4v6h-4zM324 210h4v8h-4zM358 204h4v6h-4zM451 210h3v8h-3zM485 210h4v8h-4zM485 204h4v6h-4zM519 210h4v8h-4zM523 204h3v6h-3zM817 210h3v8h-3zM827 210h4v8h-4zM865 180h3v6h-3z" fill="#43cd42"/><path d="M157 210h3v8h-3zM160 210h3v8h-3zM345 210h3v8h-3zM461 204h4v6h-4zM468 210h3v8h-3zM98 210h7v8h-7z" fill="#61d534"/><path d="M172 210h8v8h-8zM795 210h7v8h-7z" fill="#78dc28"/><path d="M461 210h4v8h-4zM506 210h3v8h-3z" fill="#7ede25"/><path d="M258 210h4v8h-4z" fill="#9be619"/><path d="M262 204h4v6h-4z" fill="#a7e914"/><path d="M802 210h6v8h-6z" fill="#c4ec09"/><path d="M130 204h7v6h-7zM262 210h4v8h-4zM500 210h6v8h-6z" fill="#c9e807"/>
<path d="M95 212.5h-4M95 200.5h-4M95 190.5h-4M95 183.5h-4M95 176.5h-4M95 170.5h-4M95 165.5h-4M95 161.5h-8M95 132.5h-4M95 115.5h-4M95 103.5h-4M95 93.5h-4M95 86.5h-4M95 79.5h-4M95 73.5h-4M95 68.5h-4M95 64.5h-8M95 35.5h-4" stroke="#1a1a1a" fill="none"/>
<text x="82.7" y="72" font-size="12" text-anchor="end" fill="#2e2e2e">10<tspan dy="-6">2</tspan></text>
<text x="82.7" y="169" font-size="12" text-anchor="end" fill="#2e2e2e">10<tspan dy="-6">1</tspan></text>
<text transform="translate(10 28) scale(0.95 1)" font-size="12" text-anchor="start" fill="#2e2e2e">CHEMS Pr.</text>
<text transform="translate(10 210) scale(0.955 1)" font-size="12" text-anchor="start" fill="#2e2e2e">LEMMS Pr.</text>
<text transform="translate(50 124) rotate(-90) scale(0.943 1)" font-size="12" text-anchor="middle" fill="#2e2e2e">Energy (keV)</text>
<rect x="1092" y="30" width="12" height="191" fill="url(#cb)"/>
<path d="M1104.5 29V221" stroke="#1a1a1a"/>
<path d="M1105 219.5h4M1105 214.5h4M1105 210.5h4M1105 207.5h4M1105 204.5h4M1105 202.5h8M1105 184.5h4M1105 174.5h4M1105 167.5h4M1105 161.5h4M1105 157.5h4M1105 153.5h4M1105 150.5h4M1105 147.5h4M1105 144.5h8M1105 127.5h4M1105 117.5h4M1105 109.5h4M1105 104.5h4M1105 99.5h4M1105 95.5h4M1105 92.5h4M1105 89.5h4M1105 87.5h8M1105 69.5h4M1105 59.5h4M1105 52.5h4M1105 46.5h4M1105 42.5h4M1105 38.5h4M1105 35.5h4M1105 32.5h4M1105 29.5h8" stroke="#1a1a1a" fill="none"/>
<text x="1117" y="37.0" font-size="12" fill="#2e2e2e">10<tspan dy="-6"><tspan textLength="6.6" lengthAdjust="spacingAndGlyphs">-</tspan>9</tspan></text>
<text x="1117" y="94.5" font-size="12" fill="#2e2e2e">10<tspan dy="-6"><tspan textLength="6.6" lengthAdjust="spacingAndGlyphs">-</tspan>10</tspan></text>
<text x="1117" y="152.0" font-size="12" fill="#2e2e2e">10<tspan dy="-6"><tspan textLength="6.6" lengthAdjust="spacingAndGlyphs">-</tspan>11</tspan></text>
<text x="1117" y="209.5" font-size="12" fill="#2e2e2e">10<tspan dy="-6"><tspan textLength="6.6" lengthAdjust="spacingAndGlyphs">-</tspan>12</tspan></text>
<text transform="translate(1165 123.75) rotate(90) scale(0.97 1)" font-size="12" text-anchor="middle" fill="#2e2e2e">pressure dyne/cm^2</text>
<rect x="95" y="224" width="986" height="193" fill="#000"/>
<rect x="101" y="385" width="3" height="5" fill="#1414b4"/><rect x="105" y="386" width="3" height="4" fill="#1a1ad2"/><rect x="108" y="385" width="1" height="6" fill="#1414b4"/><rect x="111" y="381" width="1" height="9" fill="#1a1ad2"/><rect x="118" y="382" width="1" height="8" fill="#1414b4"/><rect x="100" y="398" width="1" height="1" fill="#1414b4"/><rect x="104" y="398" width="1" height="1" fill="#1414b4"/><rect x="108" y="398" width="1" height="1" fill="#1414b4"/><rect x="112" y="398" width="1" height="1" fill="#1414b4"/><rect x="119" y="398" width="1" height="1" fill="#1414b4"/><rect x="127" y="398" width="1" height="1" fill="#1414b4"/><rect x="103" y="395" width="1" height="2" fill="#1414b4"/><rect x="144" y="381" width="4" height="21" fill="#1a1ad2"/><rect x="145" y="379" width="2" height="24" fill="#2030ee"/><rect x="150" y="385" width="5" height="5" fill="#1a1ad2"/><rect x="148" y="393" width="3" height="4" fill="#1a1ad2"/><rect x="152" y="395" width="2" height="2" fill="#1414b4"/><rect x="175" y="382" width="3" height="8" fill="#1a1ad2"/><rect x="181" y="385" width="4" height="5" fill="#1a1ad2"/><rect x="182" y="382" width="1" height="19" fill="#1414b4"/><rect x="172" y="394" width="3" height="3" fill="#1414b4"/><rect x="175" y="396" width="4" height="2" fill="#1a1ad2"/><rect x="177" y="393" width="2" height="3" fill="#1414b4"/><rect x="200" y="385" width="6" height="5" fill="#1a1ad2"/><rect x="201" y="382" width="1" height="19" fill="#1a1ad2"/><rect x="203" y="393" width="2" height="6" fill="#1414b4"/><rect x="227" y="386" width="1" height="4" fill="#1414b4"/><rect x="231" y="380" width="1" height="20" fill="#1a1ad2"/><rect x="232" y="385" width="7" height="5" fill="#1a1ad2"/><rect x="241" y="385" width="2" height="5" fill="#1414b4"/><rect x="228" y="394" width="1" height="5" fill="#1414b4"/><rect x="231" y="393" width="1" height="6" fill="#1a1ad2"/><rect x="238" y="394" width="1" height="5" fill="#1414b4"/><rect x="255" y="385" width="2" height="5" fill="#1414b4"/><rect x="257" y="378" width="4" height="23" fill="#1a1ad2"/><rect x="258" y="380" width="7" height="11" fill="#2030ee"/><rect x="257" y="392" width="8" height="8" fill="#1a1ad2"/><rect x="259" y="393" width="4" height="8" fill="#2030ee"/><rect x="368" y="398" width="1" height="1" fill="#1414b4"/><rect x="796" y="396" width="1" height="1" fill="#101060"/>
<path d="M95 407.5h-4M95 391.5h-4M95 378.5h-4M95 368.5h-4M95 359.5h-4M95 352.5h-4M95 345.5h-4M95 339.5h-8M95 334.5h-4M95 329.5h-4M95 324.5h-4M95 320.5h-4M95 316.5h-4M95 313.5h-4M95 309.5h-4M95 306.5h-4M95 303.5h-4M95 300.5h-8M95 297.5h-4M95 295.5h-4M95 292.5h-4M95 290.5h-4M95 288.5h-4M95 285.5h-4M95 283.5h-4M95 281.5h-4M95 279.5h-4M95 277.5h-8M95 275.5h-4M95 274.5h-4M95 272.5h-4M95 270.5h-4M95 269.5h-4M95 267.5h-4M95 265.5h-4M95 264.5h-4M95 262.5h-4M95 261.5h-8M95 260.5h-4M95 258.5h-4M95 257.5h-4M95 256.5h-4M95 254.5h-4M95 253.5h-4M95 252.5h-4M95 251.5h-4M95 250.5h-4M95 248.5h-8M95 247.5h-4M95 246.5h-4M95 245.5h-4M95 244.5h-4M95 243.5h-4M95 242.5h-4M95 241.5h-4M95 240.5h-4M95 239.5h-4M95 238.5h-8M95 237.5h-4M95 236.5h-4M95 235.5h-4M95 234.5h-4M95 234.5h-4M95 233.5h-4M95 232.5h-4M95 231.5h-4M95 230.5h-4M95 229.5h-8M95 229.5h-4M95 228.5h-4M95 227.5h-4M95 226.5h-4M95 226.5h-4M95 225.5h-4" stroke="#1a1a1a" fill="none"/>
<text transform="translate(82.7 344)" font-size="12" text-anchor="end" fill="#2e2e2e" letter-spacing="0.18">100.</text>
<text transform="translate(82.7 305)" font-size="12" text-anchor="end" fill="#2e2e2e" letter-spacing="0.18">200.</text>
<text transform="translate(82.7 282)" font-size="12" text-anchor="end" fill="#2e2e2e" letter-spacing="0.18">300.</text>
<text transform="translate(82.7 266)" font-size="12" text-anchor="end" fill="#2e2e2e" letter-spacing="0.18">400.</text>
<text transform="translate(82.7 253)" font-size="12" text-anchor="end" fill="#2e2e2e" letter-spacing="0.18">500.</text>
<text transform="translate(82.7 243)" font-size="12" text-anchor="end" fill="#2e2e2e" letter-spacing="0.18">600.</text>
<text transform="translate(82.7 234)" font-size="12" text-anchor="end" fill="#2e2e2e" letter-spacing="0.18">700.</text>
<text transform="translate(46.2 320.4) rotate(-90) scale(0.943 1)" font-size="12" text-anchor="middle" fill="#2e2e2e">Energy (keV)</text>
<rect x="1092" y="226" width="12" height="191" fill="url(#cb)"/>
<path d="M1104.5 225V417" stroke="#1a1a1a"/>
<path d="M1105 414.5h4M1105 410.5h4M1105 406.5h4M1105 403.5h4M1105 400.5h4M1105 397.5h8M1105 380.5h4M1105 370.5h4M1105 363.5h4M1105 357.5h4M1105 353.5h4M1105 349.5h4M1105 345.5h4M1105 343.5h4M1105 340.5h8M1105 323.5h4M1105 313.5h4M1105 305.5h4M1105 300.5h4M1105 295.5h4M1105 291.5h4M1105 288.5h4M1105 285.5h4M1105 283.5h8M1105 265.5h4M1105 255.5h4M1105 248.5h4M1105 243.5h4M1105 238.5h4M1105 234.5h4M1105 231.5h4M1105 228.5h4M1105 225.5h8" stroke="#1a1a1a" fill="none"/>
<text x="1117" y="233.3" font-size="12" fill="#2e2e2e">10<tspan dy="-6"><tspan textLength="6.6" lengthAdjust="spacingAndGlyphs">-</tspan>9</tspan></text>
<text x="1117" y="290.5" font-size="12" fill="#2e2e2e">10<tspan dy="-6"><tspan textLength="6.6" lengthAdjust="spacingAndGlyphs">-</tspan>10</tspan></text>
<text x="1117" y="347.7" font-size="12" fill="#2e2e2e">10<tspan dy="-6"><tspan textLength="6.6" lengthAdjust="spacingAndGlyphs">-</tspan>11</tspan></text>
<text x="1117" y="405.2" font-size="12" fill="#2e2e2e">10<tspan dy="-6"><tspan textLength="6.6" lengthAdjust="spacingAndGlyphs">-</tspan>12</tspan></text>
<text transform="translate(1165 320) rotate(90) scale(0.97 1)" font-size="12" text-anchor="middle" fill="#2e2e2e">pressure dyne/cm^2</text>
<rect x="95.5" y="420.5" width="985" height="88" fill="#fff" stroke="#1a1a1a"/>
<clipPath id="c3"><rect x="96" y="421" width="984" height="87.6"/></clipPath><g clip-path="url(#c3)" fill="none" stroke-width="1.15" stroke-linejoin="round" shape-rendering="auto"><path d="M101.3 461.3L104.7 461.3L107.5 466.3L111.2 464.3L114.5 476.3L118.3 464.3L121.7 473.3L128.3 463.7L130.8 475.0L131.5 478.7L131.5 510.0M138.3 510.0L138.7 490.0L142.5 453.3L148.3 445.3L152.5 458.7L155.3 461.7L159.2 476.7L159.7 510.0M166.3 510.0L166.3 483.3L169.5 491.7L172.5 463.7L176.3 456.3L180.0 456.3L183.3 457.5L183.5 510.0M193.3 510.0L193.3 492.0M200.3 510.0L200.3 462.5L203.7 458.3L210.8 465.3L213.7 481.3L217.5 481.7L220.8 486.3L225.0 475.0L228.3 466.3L234.7 461.3L238.0 470.3L241.7 468.7L244.7 491.3L251.3 486.7L255.0 470.0L261.7 450.3L265.3 455.0L268.7 455.3L271.7 486.7L272.0 510.0M285.3 510.0L285.3 471.3L289.2 470.0L292.5 460.3L295.0 461.7L299.7 457.5L302.5 460.0L306.7 475.0L309.7 455.3L312.2 471.3L315.8 470.0L319.5 478.3L319.7 510.0M326.3 510.0L326.3 493.3L330.3 466.7L333.7 470.3L336.7 492.5L340.3 468.3L343.3 481.7L343.7 510.0M353.3 510.0L353.3 489.7L357.5 492.0L360.8 477.5L365.0 461.7L367.5 455.3L374.7 462.5L377.5 458.7L384.2 463.7L388.3 474.2L394.7 461.7L399.2 467.5L401.7 466.7L405.8 483.3L408.7 463.7L412.5 488.7L415.3 467.5L418.3 468.3L425.8 461.3L429.7 465.0L435.5 459.7L439.7 467.5L442.5 467.5L446.7 457.5L449.2 476.3L453.0 461.7L456.3 466.3L459.7 459.7L466.7 486.7L470.0 493.3L473.3 477.5L476.7 493.3L480.8 486.7L483.3 486.3L487.5 465.3L490.3 463.7L495.0 470.0L497.5 470.0L500.8 459.2L508.0 466.7L511.7 485.8L511.7 510.0M517.5 510.0L517.5 486.7L521.7 472.5L531.7 461.3L538.3 472.5L538.7 510.0M548.3 510.0L548.3 464.2L554.2 480.8L558.3 489.2L562.5 479.2L562.5 510.0M569.2 510.0L569.2 479.2L572.0 484.2L572.5 510.0M579.2 510.0L579.2 491.7M586.3 510.0L586.3 462.0L589.7 476.7L590.0 510.0M603.3 510.0L603.3 483.3L611.7 492.5L613.3 484.2L613.7 510.0M699.5 510.0L699.5 475.0M716.3 510.0L716.3 465.0L719.7 461.3L723.0 462.5L726.3 461.3L729.5 478.7L733.3 456.3L736.7 454.2L743.3 460.8L746.7 480.3L750.3 463.7L753.3 480.3L757.5 466.3L760.3 483.3L763.3 474.2L763.7 510.0M770.3 510.0L770.3 473.7L774.7 492.5L777.8 477.5L784.2 473.7L787.8 465.0L791.7 475.0L794.7 462.5L798.3 465.0L801.7 460.3L805.0 460.3L808.3 464.2L811.3 462.5L815.3 470.0L818.7 473.7L822.5 477.5L825.3 464.2L829.2 477.5L832.5 465.3L835.8 471.3L842.5 487.5L845.8 479.2L856.3 474.2L860.0 469.2L866.7 465.3L869.7 457.5L873.7 469.2L878.3 475.0L883.3 483.3L885.0 475.0L886.7 466.3L890.8 469.2L893.7 454.2L900.5 472.5L904.5 466.3L904.7 510.0M910.3 510.0L910.3 480.0M921.5 510.0L921.5 488.7M927.5 510.0L927.5 488.3L931.3 475.3L931.5 510.0M941.7 510.0L941.7 478.3L945.5 466.3L948.3 474.2L951.7 461.3L955.3 476.7L955.7 510.0M1003.3 510.0L1003.3 475.0M1013.3 510.0L1013.3 482.5M1068.3 510.0L1068.3 468.3L1074.2 483.3L1078.3 479.2" stroke="#00ff00"/><path d="M94.2 501.7L96.3 498.3L100.8 489.2L104.2 488.7L105.0 487.5L107.5 488.3L111.2 488.0L114.7 491.3L118.3 488.3L122.5 492.8L125.0 491.7L128.3 495.0L130.8 501.7L134.2 505.3L136.7 498.3L138.7 498.3L142.5 491.7L145.8 480.3L147.5 482.5L149.2 491.3L152.5 486.3L154.7 488.3L159.2 503.3L160.8 508.0L163.3 504.2L168.3 494.2L170.8 493.3L175.8 484.2L179.2 490.0L182.0 485.3L184.2 488.3L186.7 498.3L189.7 507.5L192.5 504.2L195.0 505.0L201.7 486.3L205.0 488.0L208.3 497.0L210.0 493.3L212.5 499.2L214.2 497.5L216.3 505.0L218.3 510.0L219.7 505.0L223.3 492.5L226.7 489.2L229.2 490.0L231.7 483.3L234.7 490.0L236.7 489.7L238.3 486.7L241.7 490.8L245.0 495.8L247.0 496.7L250.0 502.0L251.7 501.7L254.2 495.0L255.8 495.8L259.7 481.7L261.7 485.0L264.2 485.8L266.7 490.0L270.0 498.3L271.7 501.7L273.3 510.0M275.3 510.0L275.8 505.0L276.7 510.0M283.3 510.0L283.7 497.5L285.0 498.3L286.7 491.7L290.0 496.7L292.5 492.0L295.0 494.2L297.0 496.3L300.0 503.3L301.7 510.0L303.3 505.0L304.7 510.0M309.2 510.0L310.0 504.2L313.3 501.3L315.8 506.7L316.3 510.0M329.2 510.0L330.0 505.8L332.5 506.7L334.7 505.0L335.3 510.0M356.7 510.0L358.0 502.5L360.8 495.0L362.5 498.3L364.2 494.2L365.8 496.7L367.5 492.5L370.8 493.3L375.0 496.3L377.8 498.3L380.0 500.8L381.7 500.0L383.3 506.7L384.2 510.0M387.5 510.0L389.2 505.0L391.3 497.5L393.3 506.7L395.5 499.7L397.0 498.3L398.7 503.3L400.8 506.7L402.5 504.2L405.0 505.0L405.8 510.0M408.3 510.0L410.0 505.0L412.5 507.5L414.2 505.8L415.3 510.0M417.5 510.0L418.3 503.3L419.7 504.2L420.8 510.0M435.0 510.0L435.8 508.0L436.7 510.0M439.2 510.0L440.0 505.8L441.7 510.0M485.0 510.0L486.7 508.0L488.3 510.0M491.7 510.0L493.3 505.0L495.0 503.3L495.5 507.5L496.0 510.0M721.7 510.0L722.5 498.3L724.2 497.5L727.5 507.5L729.2 502.5L730.8 503.3L733.0 498.3L734.7 494.2L736.3 500.8L737.5 499.7L739.7 506.7L741.7 510.0L743.3 501.7L744.7 507.5L745.8 503.3L747.5 510.0M749.2 510.0L751.7 505.8L753.0 507.5L755.0 501.7L756.7 497.5L758.3 498.0L759.7 505.0L760.8 510.0M783.3 510.0L784.7 502.5L786.3 502.0L786.7 510.0M789.2 510.0L789.7 500.3L792.5 500.0L793.7 495.3L797.0 496.3L799.7 499.2L801.7 506.7L802.5 510.0M805.0 510.0L805.8 508.3L807.5 510.0M810.8 510.0L811.7 507.5L812.5 510.0M857.5 510.0L860.0 505.8L861.7 508.3L863.7 505.0L865.0 507.5L867.5 503.3L869.2 505.8L871.7 503.0L873.3 506.7L874.2 510.0" stroke="#ff0000"/><path d="M101.3 466.3L105.0 468.3L111.7 471.3L115.0 469.3L120.8 470.3L125.5 463.3L128.3 465.3L132.0 475.0L135.5 479.3L138.7 470.3L142.2 474.2L145.8 467.5L152.5 465.0L155.8 470.8L159.2 477.5L162.5 482.5L166.3 480.8L170.0 470.0L172.5 463.7L176.7 463.3L183.0 465.3L185.8 475.0L189.7 480.3L193.3 473.7L196.7 479.5L200.0 477.5L203.3 469.3L210.0 472.5L213.7 471.7L217.5 474.7L221.2 478.7L225.0 473.0L228.0 466.7L230.3 469.3L234.7 464.2L238.0 468.7L241.7 468.7L244.7 470.3L248.7 482.5L252.5 473.7L258.0 471.3L261.7 459.7L265.0 459.3L268.3 461.3L271.7 470.0L275.8 481.7L278.7 484.2L282.5 477.0L286.7 474.7L289.2 471.7L292.5 472.5L295.0 468.3L298.3 476.7L302.5 487.5L306.3 488.7L310.0 475.0L312.5 470.0L316.7 475.8L320.0 490.8L323.3 492.8L326.3 480.3L330.3 485.3L334.2 475.0L337.5 472.0L340.0 471.7L340.3 510.0M350.3 510.0L350.3 493.3L354.2 488.3L360.8 479.2L364.2 479.2L367.5 475.3L371.7 481.3L374.2 481.3L377.8 472.0L381.7 469.3L385.8 477.5L389.2 483.7L391.7 485.3L394.7 479.5L397.5 480.0L401.7 477.5L405.8 488.3L408.7 477.5L411.7 481.3L415.3 488.7L419.2 475.8L422.5 488.7L429.7 475.8L435.5 499.2L439.7 475.8L442.0 481.3L446.7 473.3L449.2 488.3L456.7 472.5L462.5 488.7L466.7 496.3L470.3 481.3L473.3 484.2L476.7 472.5L480.8 476.7L483.3 485.8L483.7 510.0M490.3 510.0L490.3 473.7L495.0 478.7L497.5 484.2L504.7 465.0L508.0 470.8L514.7 478.3L520.8 478.7L524.2 485.8L524.7 510.0M531.3 510.0L531.3 489.2L535.8 494.5L538.0 493.3L541.7 481.7L545.8 476.7L548.3 471.7M555.3 510.0L555.3 491.3L558.3 504.2L561.7 486.7L565.0 479.2L565.3 510.0M572.0 510.0L572.0 480.0L576.7 495.3L579.2 490.8L582.5 479.2L586.3 496.7L586.7 510.0M593.3 510.0L593.3 489.2M604.2 495.0L606.3 497.0L610.3 479.2L613.7 501.7L617.5 480.0L620.8 494.2L623.3 497.0L628.3 508.3L628.7 510.0M634.7 510.0L634.7 481.7L637.5 481.7L637.5 510.0M647.5 510.0L647.5 507.0M654.7 510.0L654.7 493.3L658.3 492.5L658.3 510.0M665.0 510.0L668.7 493.3L675.3 504.2L679.2 499.2L681.7 500.3L685.8 510.0M686.7 510.0L688.3 503.3L688.7 510.0M702.0 510.0L702.5 498.3L705.5 484.2L709.2 510.0M719.2 510.0L719.7 498.3L722.5 474.2L726.7 475.3L730.0 473.7L736.7 468.3L740.8 471.3L746.7 470.3L750.0 478.3L753.3 482.5L757.5 476.3L760.3 479.2L763.3 472.5L767.5 480.3L770.8 474.2L774.7 475.8L777.8 481.3L781.7 476.7L784.2 475.8L787.8 479.2L791.7 473.7L798.3 466.7L808.3 468.7L814.2 472.5L818.7 474.7L822.5 480.3L829.2 474.2L832.5 488.3L835.8 474.2L842.5 497.5L849.2 481.3L858.3 485.0L863.3 489.2L866.7 482.5L873.7 473.3L876.7 506.7L880.3 473.3L883.3 492.5L885.0 485.0L886.7 474.2L890.8 485.8L894.2 490.0L900.5 495.3L904.2 482.5M910.8 484.2L914.5 474.2L914.7 510.0M921.5 484.2L921.5 488.7M942.0 496.7L945.8 501.3L951.7 503.3L955.0 498.3M965.5 510.0L965.5 490.0M975.3 510.0L975.3 503.3L982.5 500.3L982.5 510.0M1013.3 479.2L1013.3 482.5M1044.5 510.0L1044.5 496.3M1050.3 510.0L1050.3 504.2M1057.5 510.0L1057.5 495.8L1061.7 486.3L1064.2 510.0M1078.3 510.0L1078.3 480.0" stroke="#0000ff"/></g>
<path d="M95 507.5h-4M95 505.5h-4M95 504.5h-4M95 503.5h-4M95 502.5h-8M95 495.5h-4M95 492.5h-4M95 489.5h-4M95 487.5h-4M95 485.5h-4M95 483.5h-4M95 482.5h-4M95 481.5h-4M95 480.5h-8M95 474.5h-4M95 470.5h-4M95 467.5h-4M95 465.5h-4M95 463.5h-4M95 462.5h-4M95 460.5h-4M95 459.5h-4M95 458.5h-8M95 452.5h-4M95 448.5h-4M95 445.5h-4M95 443.5h-4M95 441.5h-4M95 440.5h-4M95 438.5h-4M95 437.5h-4M95 436.5h-8M95 430.5h-4M95 426.5h-4M95 423.5h-4M95 421.5h-4" stroke="#1a1a1a" fill="none"/>
<text x="82.7" y="444.5" font-size="12" text-anchor="end" fill="#2e2e2e">10<tspan dy="-6"><tspan textLength="6.6" lengthAdjust="spacingAndGlyphs">-</tspan>9</tspan></text>
<text x="82.7" y="466.5" font-size="12" text-anchor="end" fill="#2e2e2e">10<tspan dy="-6"><tspan textLength="6.6" lengthAdjust="spacingAndGlyphs">-</tspan>10</tspan></text>
<text x="82.7" y="488.5" font-size="12" text-anchor="end" fill="#2e2e2e">10<tspan dy="-6"><tspan textLength="6.6" lengthAdjust="spacingAndGlyphs">-</tspan>11</tspan></text>
<text x="82.7" y="509.5" font-size="12" text-anchor="end" fill="#2e2e2e">10<tspan dy="-6"><tspan textLength="6.6" lengthAdjust="spacingAndGlyphs">-</tspan>12</tspan></text>
<text transform="translate(35.1 466) rotate(-90) scale(0.96 1)" font-size="12" text-anchor="middle" fill="#2e2e2e">P dyn/cm^2</text>
<path d="M1091.5 426.0L1103 430.5" stroke="#0000ff" stroke-width="1.2" shape-rendering="auto"/>
<text transform="translate(1107 433.0) scale(0.945 1)" font-size="12" text-anchor="start" fill="#2e2e2e">CHEMS<tspan textLength="6.6" lengthAdjust="spacingAndGlyphs">-</tspan>P</text>
<path d="M1091.5 441.0L1103 445.5" stroke="#ff0000" stroke-width="1.2" shape-rendering="auto"/>
<text transform="translate(1107 448.0) scale(0.94 1)" font-size="12" text-anchor="start" fill="#2e2e2e">LEMMS<tspan textLength="6.6" lengthAdjust="spacingAndGlyphs">-</tspan>P</text>
<path d="M1091.5 456.0L1103 460.5" stroke="#00ff00" stroke-width="1.2" shape-rendering="auto"/>
<text transform="translate(1107 463.0) scale(0.935 1)" font-size="12" text-anchor="start" fill="#2e2e2e">CHEMS<tspan textLength="6.6" lengthAdjust="spacingAndGlyphs">-</tspan>O</text>
<rect x="95" y="513" width="986" height="178" fill="#000"/>
<defs><linearGradient id="b0" gradientUnits="userSpaceOnUse" x1="0" y1="647" x2="0" y2="690"><stop offset="0.000" stop-color="#29c258"/><stop offset="0.100" stop-color="#5bd437"/><stop offset="0.250" stop-color="#95e41b"/><stop offset="0.400" stop-color="#c0ef0a"/><stop offset="0.550" stop-color="#d9dd03"/><stop offset="0.700" stop-color="#eac500"/><stop offset="0.850" stop-color="#f0aa00"/><stop offset="1.000" stop-color="#f2a200"/></linearGradient><linearGradient id="b1" gradientUnits="userSpaceOnUse" x1="0" y1="647" x2="0" y2="690"><stop offset="0.000" stop-color="#2bc355"/><stop offset="0.100" stop-color="#5fd534"/><stop offset="0.250" stop-color="#9ae619"/><stop offset="0.400" stop-color="#c2ed09"/><stop offset="0.550" stop-color="#dcdb03"/><stop offset="0.700" stop-color="#eac200"/><stop offset="0.850" stop-color="#f1a500"/><stop offset="1.000" stop-color="#f49a00"/></linearGradient><linearGradient id="b2" gradientUnits="userSpaceOnUse" x1="0" y1="647" x2="0" y2="690"><stop offset="0.000" stop-color="#2dc553"/><stop offset="0.100" stop-color="#64d632"/><stop offset="0.250" stop-color="#9fe717"/><stop offset="0.400" stop-color="#c4ec08"/><stop offset="0.550" stop-color="#deda02"/><stop offset="0.700" stop-color="#ebbe00"/><stop offset="0.850" stop-color="#f39f00"/><stop offset="1.000" stop-color="#f69200"/></linearGradient><linearGradient id="b3" gradientUnits="userSpaceOnUse" x1="0" y1="647" x2="0" y2="690"><stop offset="0.000" stop-color="#2fc650"/><stop offset="0.100" stop-color="#69d830"/><stop offset="0.250" stop-color="#a3e815"/><stop offset="0.400" stop-color="#c7ea08"/><stop offset="0.550" stop-color="#e0d801"/><stop offset="0.700" stop-color="#ecbb00"/><stop offset="0.850" stop-color="#f49a00"/><stop offset="1.000" stop-color="#f88900"/></linearGradient><linearGradient id="b4" gradientUnits="userSpaceOnUse" x1="0" y1="647" x2="0" y2="690"><stop offset="0.000" stop-color="#30c74e"/><stop offset="0.100" stop-color="#6ed92d"/><stop offset="0.250" stop-color="#a8ea13"/><stop offset="0.400" stop-color="#c9e807"/><stop offset="0.550" stop-color="#e3d601"/><stop offset="0.700" stop-color="#edb700"/><stop offset="0.850" stop-color="#f59500"/><stop offset="1.000" stop-color="#fa8000"/></linearGradient><linearGradient id="b5" gradientUnits="userSpaceOnUse" x1="0" y1="647" x2="0" y2="690"><stop offset="0.000" stop-color="#32c84b"/><stop offset="0.100" stop-color="#72da2b"/><stop offset="0.250" stop-color="#adeb11"/><stop offset="0.400" stop-color="#cbe707"/><stop offset="0.550" stop-color="#e5d500"/><stop offset="0.700" stop-color="#eeb400"/><stop offset="0.850" stop-color="#f79000"/><stop offset="1.000" stop-color="#f87500"/></linearGradient><linearGradient id="b6" gradientUnits="userSpaceOnUse" x1="0" y1="647" x2="0" y2="690"><stop offset="0.000" stop-color="#37c949"/><stop offset="0.100" stop-color="#77dc29"/><stop offset="0.250" stop-color="#b1ec0f"/><stop offset="0.400" stop-color="#cde506"/><stop offset="0.550" stop-color="#e6d200"/><stop offset="0.700" stop-color="#eeb100"/><stop offset="0.850" stop-color="#f88a00"/><stop offset="1.000" stop-color="#f56b00"/></linearGradient><linearGradient id="b7" gradientUnits="userSpaceOnUse" x1="0" y1="647" x2="0" y2="690"><stop offset="0.000" stop-color="#3bcb46"/><stop offset="0.100" stop-color="#7cdd26"/><stop offset="0.250" stop-color="#b6ee0d"/><stop offset="0.400" stop-color="#d0e406"/><stop offset="0.550" stop-color="#e7cf00"/><stop offset="0.700" stop-color="#efad00"/><stop offset="0.850" stop-color="#f98500"/><stop offset="1.000" stop-color="#f36000"/></linearGradient><linearGradient id="by" gradientUnits="userSpaceOnUse" x1="0" y1="647" x2="0" y2="690"><stop offset="0" stop-color="#32c84b"/><stop offset="0.4" stop-color="#b8ee0d"/><stop offset="0.7" stop-color="#cfe406"/><stop offset="1" stop-color="#e3d601"/></linearGradient></defs><rect x="96" y="647" width="3" height="43" fill="url(#b0)"/><rect x="99" y="647" width="3" height="43" fill="url(#b2)"/><rect x="102" y="647" width="3" height="43" fill="url(#b3)"/><rect x="105" y="664" width="2" height="26" fill="url(#b3)"/><rect x="107" y="647" width="3" height="43" fill="url(#b3)"/><rect x="110" y="647" width="3" height="43" fill="url(#b3)"/><rect x="113" y="664" width="3" height="26" fill="url(#b3)"/><rect x="116" y="647" width="2" height="43" fill="url(#b4)"/><rect x="118" y="664" width="3" height="26" fill="url(#b4)"/><rect x="121" y="647" width="3" height="43" fill="url(#b5)"/><rect x="124" y="647" width="3" height="43" fill="url(#b4)"/><rect x="127" y="647" width="3" height="43" fill="url(#b2)"/><rect x="130" y="647" width="1" height="43" fill="url(#b1)"/><rect x="131" y="664" width="3" height="26" fill="url(#b1)"/><rect x="134" y="647" width="3" height="43" fill="url(#b1)"/><rect x="137" y="647" width="1" height="43" fill="url(#b1)"/><rect x="138" y="664" width="2" height="26" fill="url(#b2)"/><rect x="140" y="647" width="2" height="43" fill="url(#b2)"/><rect x="142" y="664" width="1" height="26" fill="url(#b2)"/><rect x="143" y="647" width="3" height="43" fill="url(#b2)"/><rect x="146" y="664" width="1" height="26" fill="url(#b2)"/><rect x="147" y="647" width="3" height="43" fill="url(#b2)"/><rect x="150" y="647" width="3" height="43" fill="url(#b2)"/><rect x="153" y="647" width="3" height="43" fill="url(#b3)"/><rect x="156" y="647" width="1" height="43" fill="url(#b5)"/><rect x="157" y="664" width="3" height="26" fill="url(#b5)"/><rect x="160" y="647" width="3" height="43" fill="url(#b7)"/><rect x="163" y="647" width="1" height="43" fill="url(#b7)"/><rect x="164" y="664" width="2" height="26" fill="url(#b7)"/><rect x="166" y="647" width="3" height="43" fill="url(#b7)"/><rect x="169" y="664" width="2" height="26" fill="url(#b6)"/><rect x="171" y="647" width="3" height="43" fill="url(#b6)"/><rect x="174" y="647" width="1" height="43" fill="url(#b7)"/><rect x="175" y="664" width="1" height="26" fill="url(#b7)"/><rect x="176" y="647" width="3" height="43" fill="url(#b7)"/><rect x="179" y="647" width="1" height="43" fill="url(#b7)"/><rect x="180" y="664" width="2" height="26" fill="url(#b7)"/><rect x="182" y="647" width="3" height="43" fill="url(#b6)"/><rect x="185" y="647" width="2" height="43" fill="url(#b5)"/><rect x="187" y="664" width="1" height="26" fill="url(#b4)"/><rect x="188" y="647" width="3" height="43" fill="url(#b3)"/><rect x="191" y="647" width="3" height="43" fill="url(#b2)"/><rect x="194" y="647" width="2" height="43" fill="url(#b3)"/><rect x="196" y="664" width="1" height="26" fill="url(#b3)"/><rect x="197" y="647" width="3" height="43" fill="url(#b3)"/><rect x="200" y="664" width="1" height="26" fill="url(#b4)"/><rect x="201" y="647" width="3" height="43" fill="url(#b4)"/><rect x="204" y="647" width="3" height="43" fill="url(#b3)"/><rect x="207" y="647" width="3" height="43" fill="url(#b3)"/><rect x="210" y="647" width="1" height="43" fill="url(#b3)"/><rect x="211" y="664" width="1" height="26" fill="url(#b3)"/><rect x="212" y="647" width="3" height="43" fill="url(#b4)"/><rect x="215" y="647" width="1" height="43" fill="url(#b5)"/><rect x="216" y="664" width="1" height="26" fill="url(#b5)"/><rect x="217" y="647" width="2" height="43" fill="url(#b6)"/><rect x="219" y="664" width="1" height="26" fill="url(#b6)"/><rect x="220" y="647" width="3" height="43" fill="url(#b6)"/><rect x="223" y="647" width="1" height="43" fill="url(#b5)"/><rect x="224" y="664" width="1" height="26" fill="url(#b5)"/><rect x="225" y="647" width="3" height="43" fill="url(#b5)"/><rect x="228" y="647" width="1" height="43" fill="url(#b4)"/><rect x="229" y="664" width="1" height="26" fill="url(#b3)"/><rect x="230" y="647" width="3" height="43" fill="url(#b3)"/><rect x="233" y="647" width="3" height="43" fill="url(#b3)"/><rect x="236" y="664" width="1" height="26" fill="url(#b3)"/><rect x="237" y="647" width="3" height="43" fill="url(#b3)"/><rect x="240" y="647" width="1" height="43" fill="url(#b2)"/><rect x="241" y="664" width="1" height="26" fill="url(#b2)"/><rect x="242" y="647" width="3" height="43" fill="url(#b1)"/><rect x="245" y="647" width="1" height="43" fill="url(#b0)"/><rect x="246" y="664" width="2" height="26" fill="url(#b0)"/><rect x="248" y="647" width="3" height="43" fill="url(#b0)"/><rect x="251" y="647" width="2" height="43" fill="url(#b0)"/><rect x="253" y="664" width="1" height="26" fill="url(#b0)"/><rect x="254" y="647" width="3" height="43" fill="url(#b0)"/><rect x="257" y="647" width="3" height="43" fill="url(#b1)"/><rect x="260" y="664" width="2" height="26" fill="url(#b2)"/><rect x="262" y="647" width="3" height="43" fill="url(#b2)"/><rect x="265" y="647" width="1" height="43" fill="url(#b1)"/><rect x="266" y="664" width="3" height="26" fill="url(#b1)"/><rect x="269" y="664" width="3" height="26" fill="url(#b2)"/><rect x="272" y="664" width="1" height="26" fill="url(#b4)"/><rect x="273" y="647" width="1" height="43" fill="url(#b4)"/><rect x="274" y="664" width="3" height="26" fill="url(#b5)"/><rect x="277" y="664" width="3" height="26" fill="url(#b6)"/><rect x="280" y="664" width="3" height="26" fill="url(#b6)"/><rect x="283" y="664" width="3" height="26" fill="url(#b5)"/><rect x="286" y="664" width="3" height="26" fill="url(#b4)"/><rect x="289" y="664" width="3" height="26" fill="url(#b3)"/><rect x="292" y="664" width="1" height="26" fill="url(#b4)"/><rect x="293" y="647" width="1" height="43" fill="url(#b4)"/><rect x="294" y="664" width="3" height="26" fill="url(#b4)"/><rect x="297" y="664" width="3" height="26" fill="url(#b4)"/><rect x="300" y="664" width="3" height="26" fill="url(#b3)"/><rect x="303" y="664" width="3" height="26" fill="url(#b2)"/><rect x="306" y="664" width="3" height="26" fill="url(#b2)"/><rect x="309" y="664" width="3" height="26" fill="url(#b2)"/><rect x="312" y="664" width="1" height="26" fill="url(#b4)"/><rect x="313" y="647" width="1" height="43" fill="url(#b4)"/><rect x="314" y="664" width="3" height="26" fill="url(#b5)"/><rect x="317" y="664" width="3" height="26" fill="url(#b6)"/><rect x="320" y="677" width="1" height="13" fill="url(#b6)"/><rect x="324" y="677" width="1" height="13" fill="url(#b6)"/><rect x="325" y="664" width="2" height="26" fill="url(#b6)"/><rect x="327" y="647" width="1" height="43" fill="url(#b6)"/><rect x="328" y="664" width="2" height="26" fill="url(#b6)"/><rect x="330" y="647" width="1" height="43" fill="url(#b7)"/><rect x="331" y="664" width="3" height="26" fill="url(#b7)"/><rect x="334" y="664" width="3" height="26" fill="url(#b7)"/><rect x="337" y="664" width="3" height="26" fill="url(#b7)"/><rect x="340" y="664" width="3" height="26" fill="url(#b7)"/><rect x="343" y="664" width="3" height="26" fill="url(#b5)"/><rect x="346" y="677" width="3" height="13" fill="url(#b4)"/><rect x="349" y="664" width="2" height="26" fill="url(#b3)"/><rect x="351" y="647" width="1" height="43" fill="url(#b3)"/><rect x="352" y="664" width="3" height="26" fill="url(#b3)"/><rect x="355" y="664" width="3" height="26" fill="url(#b3)"/><rect x="358" y="664" width="3" height="26" fill="url(#b2)"/><rect x="361" y="664" width="3" height="26" fill="url(#b1)"/><rect x="364" y="647" width="1" height="43" fill="url(#b0)"/><rect x="365" y="664" width="3" height="26" fill="url(#b0)"/><rect x="368" y="664" width="3" height="26" fill="url(#b1)"/><rect x="371" y="664" width="3" height="26" fill="url(#b2)"/><rect x="374" y="664" width="1" height="26" fill="url(#b4)"/><rect x="375" y="647" width="1" height="43" fill="url(#b4)"/><rect x="376" y="664" width="3" height="26" fill="url(#b4)"/><rect x="379" y="647" width="1" height="43" fill="url(#b4)"/><rect x="380" y="664" width="3" height="26" fill="url(#b4)"/><rect x="383" y="664" width="3" height="26" fill="url(#b3)"/><rect x="386" y="664" width="3" height="26" fill="url(#b3)"/><rect x="389" y="664" width="3" height="26" fill="url(#b4)"/><rect x="392" y="664" width="3" height="26" fill="url(#b4)"/><rect x="395" y="664" width="3" height="26" fill="url(#b4)"/><rect x="398" y="664" width="3" height="26" fill="url(#b3)"/><rect x="401" y="664" width="3" height="26" fill="url(#b1)"/><rect x="404" y="664" width="3" height="26" fill="url(#b0)"/><rect x="407" y="664" width="3" height="26" fill="url(#b0)"/><rect x="410" y="664" width="3" height="26" fill="url(#b1)"/><rect x="413" y="664" width="2" height="26" fill="url(#b1)"/><rect x="415" y="647" width="1" height="43" fill="url(#b1)"/><rect x="416" y="664" width="3" height="26" fill="url(#b1)"/><rect x="419" y="664" width="3" height="26" fill="url(#b1)"/><rect x="422" y="664" width="3" height="26" fill="url(#b0)"/><rect x="425" y="664" width="3" height="26" fill="url(#b1)"/><rect x="428" y="664" width="3" height="26" fill="url(#b3)"/><rect x="431" y="664" width="3" height="26" fill="url(#b5)"/><rect x="434" y="664" width="3" height="26" fill="url(#b6)"/><rect x="437" y="664" width="1" height="26" fill="url(#b6)"/><rect x="438" y="647" width="1" height="43" fill="url(#b6)"/><rect x="439" y="664" width="1" height="26" fill="url(#b6)"/><rect x="440" y="647" width="2" height="43" fill="url(#b5)"/><rect x="442" y="664" width="3" height="26" fill="url(#b5)"/><rect x="445" y="647" width="1" height="43" fill="url(#b5)"/><rect x="446" y="664" width="3" height="26" fill="url(#b6)"/><rect x="449" y="647" width="2" height="43" fill="url(#b6)"/><rect x="451" y="664" width="2" height="26" fill="url(#b7)"/><rect x="453" y="677" width="3" height="13" fill="url(#b7)"/><rect x="456" y="677" width="3" height="13" fill="url(#b5)"/><rect x="459" y="677" width="3" height="13" fill="url(#b4)"/><rect x="462" y="677" width="2" height="13" fill="url(#b3)"/><rect x="464" y="664" width="3" height="26" fill="url(#b3)"/><rect x="467" y="664" width="3" height="26" fill="url(#b3)"/><rect x="470" y="664" width="3" height="26" fill="url(#b4)"/><rect x="473" y="664" width="3" height="26" fill="url(#b4)"/><rect x="481" y="664" width="3" height="26" fill="url(#b4)"/><rect x="484" y="664" width="2" height="26" fill="url(#b4)"/><rect x="487" y="664" width="2" height="26" fill="url(#b6)"/><rect x="490" y="664" width="2" height="26" fill="url(#b7)"/><rect x="493" y="664" width="3" height="26" fill="url(#b7)"/><rect x="496" y="664" width="1" height="26" fill="url(#b7)"/><rect x="497" y="677" width="3" height="13" fill="url(#b6)"/><rect x="500" y="677" width="1" height="13" fill="url(#b5)"/><rect x="502" y="677" width="2" height="13" fill="url(#b5)"/><rect x="505" y="677" width="1" height="13" fill="url(#b4)"/><rect x="506" y="664" width="1" height="26" fill="url(#b4)"/><rect x="508" y="677" width="1" height="13" fill="url(#b4)"/><rect x="509" y="664" width="1" height="26" fill="url(#b4)"/><rect x="511" y="677" width="2" height="13" fill="url(#b4)"/><rect x="513" y="664" width="1" height="26" fill="url(#b3)"/><rect x="514" y="677" width="3" height="13" fill="url(#b3)"/><rect x="517" y="677" width="2" height="13" fill="url(#b1)"/><rect x="521" y="647" width="1" height="43" fill="url(#b0)"/><rect x="525" y="677" width="1" height="13" fill="url(#by)"/><rect x="529" y="677" width="2" height="13" fill="url(#by)"/><rect x="533" y="677" width="1" height="13" fill="url(#by)"/><rect x="535" y="664" width="1" height="26" fill="url(#by)"/><rect x="551" y="677" width="1" height="13" fill="url(#by)"/><rect x="570" y="664" width="1" height="26" fill="url(#by)"/><rect x="571" y="677" width="1" height="13" fill="url(#by)"/><rect x="578" y="677" width="1" height="13" fill="url(#by)"/><rect x="580" y="664" width="1" height="26" fill="url(#by)"/><rect x="581" y="677" width="2" height="13" fill="url(#by)"/><rect x="586" y="677" width="1" height="13" fill="url(#by)"/><rect x="589" y="677" width="2" height="13" fill="url(#by)"/><rect x="593" y="677" width="1" height="13" fill="url(#by)"/><rect x="598" y="677" width="2" height="13" fill="url(#by)"/><rect x="601" y="677" width="2" height="13" fill="url(#by)"/><rect x="606" y="664" width="1" height="26" fill="url(#by)"/><rect x="608" y="677" width="1" height="13" fill="url(#by)"/><rect x="611" y="677" width="1" height="13" fill="url(#by)"/><rect x="620" y="677" width="3" height="13" fill="url(#by)"/><rect x="623" y="677" width="2" height="13" fill="url(#by)"/><rect x="625" y="664" width="1" height="26" fill="url(#by)"/><rect x="643" y="677" width="3" height="13" fill="url(#by)"/><rect x="646" y="677" width="2" height="13" fill="url(#by)"/><rect x="648" y="664" width="1" height="26" fill="url(#by)"/><rect x="649" y="677" width="3" height="13" fill="url(#by)"/><rect x="652" y="677" width="1" height="13" fill="url(#by)"/><rect x="660" y="664" width="2" height="26" fill="url(#by)"/><rect x="708" y="677" width="1" height="13" fill="url(#by)"/><rect x="710" y="677" width="1" height="13" fill="url(#by)"/><rect x="712" y="677" width="1" height="13" fill="url(#b4)"/><rect x="714" y="677" width="1" height="13" fill="url(#b4)"/><rect x="716" y="677" width="1" height="13" fill="url(#b4)"/><rect x="717" y="664" width="3" height="26" fill="url(#b4)"/><rect x="720" y="664" width="3" height="26" fill="url(#b5)"/><rect x="723" y="647" width="1" height="43" fill="url(#b6)"/><rect x="724" y="664" width="3" height="26" fill="url(#b6)"/><rect x="727" y="664" width="2" height="26" fill="url(#b5)"/><rect x="729" y="647" width="1" height="43" fill="url(#b5)"/><rect x="730" y="664" width="3" height="26" fill="url(#b4)"/><rect x="733" y="664" width="3" height="26" fill="url(#b3)"/><rect x="736" y="664" width="1" height="26" fill="url(#b2)"/><rect x="737" y="647" width="1" height="43" fill="url(#b2)"/><rect x="738" y="664" width="3" height="26" fill="url(#b2)"/><rect x="741" y="664" width="3" height="26" fill="url(#b3)"/><rect x="744" y="664" width="1" height="26" fill="url(#b4)"/><rect x="745" y="647" width="1" height="43" fill="url(#b4)"/><rect x="746" y="664" width="3" height="26" fill="url(#b4)"/><rect x="749" y="664" width="2" height="26" fill="url(#b4)"/><rect x="751" y="647" width="1" height="43" fill="url(#b4)"/><rect x="752" y="664" width="3" height="26" fill="url(#b3)"/><rect x="755" y="664" width="3" height="26" fill="url(#b4)"/><rect x="758" y="664" width="3" height="26" fill="url(#b5)"/><rect x="761" y="664" width="3" height="26" fill="url(#b7)"/><rect x="764" y="647" width="1" height="43" fill="url(#b7)"/><rect x="765" y="664" width="2" height="26" fill="url(#b7)"/><rect x="767" y="647" width="1" height="43" fill="url(#b7)"/><rect x="768" y="677" width="1" height="13" fill="url(#b7)"/><rect x="769" y="664" width="3" height="26" fill="url(#b7)"/><rect x="772" y="664" width="2" height="26" fill="url(#b6)"/><rect x="774" y="677" width="1" height="13" fill="url(#b6)"/><rect x="777" y="664" width="1" height="26" fill="url(#b6)"/><rect x="778" y="677" width="1" height="13" fill="url(#b6)"/><rect x="779" y="664" width="1" height="26" fill="url(#b6)"/><rect x="780" y="647" width="2" height="43" fill="url(#b6)"/><rect x="782" y="664" width="3" height="26" fill="url(#b6)"/><rect x="785" y="677" width="1" height="13" fill="url(#b5)"/><rect x="786" y="664" width="2" height="26" fill="url(#b4)"/><rect x="788" y="647" width="1" height="43" fill="url(#b3)"/><rect x="789" y="664" width="3" height="26" fill="url(#b3)"/><rect x="792" y="664" width="1" height="26" fill="url(#b1)"/><rect x="793" y="647" width="1" height="43" fill="url(#b1)"/><rect x="794" y="677" width="1" height="13" fill="url(#b1)"/><rect x="795" y="664" width="2" height="26" fill="url(#b1)"/><rect x="797" y="677" width="1" height="13" fill="url(#b1)"/><rect x="798" y="664" width="3" height="26" fill="url(#b1)"/><rect x="801" y="677" width="1" height="13" fill="url(#b2)"/><rect x="802" y="664" width="3" height="26" fill="url(#b2)"/><rect x="805" y="664" width="3" height="26" fill="url(#b2)"/><rect x="808" y="677" width="1" height="13" fill="url(#b2)"/><rect x="809" y="664" width="2" height="26" fill="url(#b2)"/><rect x="811" y="647" width="1" height="43" fill="url(#b2)"/><rect x="812" y="677" width="1" height="13" fill="url(#b2)"/><rect x="813" y="664" width="1" height="26" fill="url(#b2)"/><rect x="814" y="677" width="3" height="13" fill="url(#b2)"/><rect x="817" y="677" width="3" height="13" fill="url(#b3)"/><rect x="820" y="664" width="2" height="26" fill="url(#b4)"/><rect x="822" y="647" width="1" height="43" fill="url(#b5)"/><rect x="823" y="664" width="2" height="26" fill="url(#b5)"/><rect x="825" y="677" width="1" height="13" fill="url(#b5)"/><rect x="826" y="647" width="2" height="43" fill="url(#b4)"/><rect x="828" y="677" width="1" height="13" fill="url(#b4)"/><rect x="829" y="647" width="1" height="43" fill="url(#b3)"/><rect x="830" y="677" width="1" height="13" fill="url(#b3)"/><rect x="831" y="664" width="1" height="26" fill="url(#b2)"/><rect x="832" y="677" width="1" height="13" fill="url(#b2)"/><rect x="833" y="664" width="1" height="26" fill="url(#b2)"/><rect x="834" y="647" width="2" height="43" fill="url(#b2)"/><rect x="836" y="664" width="1" height="26" fill="url(#b2)"/><rect x="837" y="677" width="1" height="13" fill="url(#b2)"/><rect x="838" y="647" width="1" height="43" fill="url(#b2)"/><rect x="839" y="664" width="2" height="26" fill="url(#b2)"/><rect x="845" y="677" width="3" height="13" fill="url(#b1)"/><rect x="851" y="664" width="2" height="26" fill="url(#b0)"/><rect x="853" y="647" width="1" height="43" fill="url(#b0)"/><rect x="854" y="664" width="2" height="26" fill="url(#b0)"/><rect x="856" y="647" width="1" height="43" fill="url(#b0)"/><rect x="857" y="664" width="2" height="26" fill="url(#b1)"/><rect x="859" y="647" width="2" height="43" fill="url(#b2)"/><rect x="861" y="664" width="3" height="26" fill="url(#b3)"/><rect x="864" y="664" width="2" height="26" fill="url(#b4)"/><rect x="866" y="647" width="1" height="43" fill="url(#b4)"/><rect x="867" y="664" width="1" height="26" fill="url(#b4)"/><rect x="868" y="647" width="1" height="43" fill="url(#b4)"/><rect x="869" y="664" width="3" height="26" fill="url(#b4)"/><rect x="872" y="664" width="3" height="26" fill="url(#b4)"/><rect x="875" y="664" width="3" height="26" fill="url(#b5)"/><rect x="878" y="647" width="1" height="43" fill="url(#b7)"/><rect x="879" y="677" width="1" height="13" fill="url(#b7)"/><rect x="880" y="664" width="1" height="26" fill="url(#b7)"/><rect x="881" y="677" width="1" height="13" fill="url(#b7)"/><rect x="882" y="664" width="3" height="26" fill="url(#b7)"/><rect x="885" y="677" width="2" height="13" fill="url(#b7)"/><rect x="887" y="664" width="1" height="26" fill="url(#b6)"/><rect x="888" y="677" width="1" height="13" fill="url(#b6)"/><rect x="889" y="664" width="1" height="26" fill="url(#b5)"/><rect x="890" y="677" width="1" height="13" fill="url(#b5)"/><rect x="891" y="664" width="1" height="26" fill="url(#b4)"/><rect x="892" y="677" width="1" height="13" fill="url(#b4)"/><rect x="893" y="664" width="1" height="26" fill="url(#b4)"/><rect x="894" y="677" width="3" height="13" fill="url(#b4)"/><rect x="897" y="677" width="1" height="13" fill="url(#b5)"/><rect x="899" y="677" width="3" height="13" fill="url(#b5)"/><rect x="902" y="677" width="2" height="13" fill="url(#b4)"/><rect x="906" y="677" width="2" height="13" fill="url(#b3)"/><rect x="909" y="677" width="1" height="13" fill="url(#b2)"/><rect x="911" y="677" width="1" height="13" fill="url(#by)"/><rect x="924" y="677" width="1" height="13" fill="url(#by)"/><rect x="930" y="664" width="1" height="26" fill="url(#by)"/><rect x="940" y="664" width="1" height="26" fill="url(#by)"/><rect x="943" y="664" width="1" height="26" fill="url(#by)"/><rect x="947" y="677" width="1" height="13" fill="url(#by)"/><rect x="959" y="677" width="1" height="13" fill="url(#by)"/><rect x="963" y="677" width="1" height="13" fill="url(#by)"/><rect x="967" y="677" width="1" height="13" fill="url(#by)"/><rect x="974" y="677" width="1" height="13" fill="url(#by)"/><rect x="977" y="677" width="1" height="13" fill="url(#by)"/><rect x="978" y="664" width="1" height="26" fill="url(#by)"/><rect x="987" y="664" width="1" height="26" fill="url(#by)"/><rect x="1006" y="664" width="1" height="26" fill="url(#by)"/><rect x="1010" y="677" width="1" height="13" fill="url(#by)"/><rect x="1012" y="677" width="1" height="13" fill="url(#by)"/><rect x="1026" y="664" width="1" height="26" fill="url(#by)"/><rect x="1036" y="664" width="1" height="26" fill="url(#by)"/><rect x="1039" y="677" width="1" height="13" fill="url(#by)"/><rect x="1043" y="677" width="1" height="13" fill="url(#by)"/><rect x="1052" y="677" width="1" height="13" fill="url(#by)"/><rect x="1067" y="677" width="2" height="13" fill="url(#by)"/><rect x="1070" y="677" width="1" height="13" fill="url(#by)"/><rect x="1075" y="677" width="1" height="13" fill="url(#by)"/><rect x="1079" y="677" width="2" height="13" fill="url(#by)"/><path d="M97.5 551V583M103.5 551V583M107.5 551V583M126.5 567V583M127.5 567V583M146.5 567V583M186.5 551V583M200.5 567V583M269.5 567V583M294.5 551V583M303.5 551V583M309.5 551V567M326.5 551V583M403.5 559V583M412.5 551V583M469.5 551V583M474.5 567V583M478.5 551V583M509.5 551V583M510.5 551V583M522.5 567V583M527.5 567V583M592.5 551V575M596.5 551V583M604.5 567V583M633.5 551V583M655.5 551V575M661.5 559V583M666.5 559V583M677.5 551V567M693.5 551V583M713.5 567V583M716.5 551V575M717.5 551V583M731.5 559V583M742.5 551V575M750.5 551V583M764.5 551V575M779.5 559V583M782.5 559V583M800.5 551V583M821.5 567V583M834.5 551V567M839.5 559V583M848.5 559V583M859.5 567V583M900.5 551V583M927.5 551V575M938.5 551V567M1021.5 559V583M1038.5 551V583M1076.5 551V583M136.5 525V551M199.5 538V559M206.5 522V538M240.5 522V538M265.5 530V551M293.5 530V545M302.5 525V551M312.5 538V559M327.5 538V559M333.5 522V538M403.5 530V551M422.5 530V567M448.5 538V551M451.5 530V551M471.5 530V551M488.5 538V559M499.5 530V567M540.5 530V567M554.5 530V567M558.5 538V559M608.5 530V551M676.5 530V551M692.5 538V559M720.5 538V559M722.5 538V559M729.5 522V538M753.5 530V567M807.5 522V538M810.5 538V559M819.5 530V551M847.5 530V551M851.5 522V538M954.5 538V559M977.5 530V545M997.5 530V551M171.5 515V520M330.5 515V520M462.5 515V520M641.5 515V520M718.5 515V520M956.5 515V520M1040.5 515V520" stroke="#080cb2" stroke-width="1" fill="none"/><path d="M101 567V583M281 551V567M298 551V575M464 551V583M576 559V583M630 567V583M686 559V583M740 559V583M911 551V567M1042 551V583M271 530V551M353 522V538M519 538V559M594 530V551M746 538V559" stroke="#080cb2" stroke-width="2" fill="none"/><path d="M245.5 551V575M259.5 551V583M339.5 551V575M373.5 551V583M608.5 567V583M866.5 551V575M98.5 525V551M535.5 530V551M663.5 530V551M992.5 530V567M1015.5 530V545" stroke="#080cb2" stroke-width="3" fill="none"/><path d="M138.5 551V567M143.5 567V583M149.5 559V583M163.5 559V583M169.5 551V583M206.5 551V583M262.5 567V583M265.5 567V583M313.5 567V583M316.5 567V583M367.5 567V583M418.5 551V583M427.5 551V583M441.5 559V583M465.5 551V583M481.5 559V583M548.5 551V583M572.5 551V583M674.5 551V583M678.5 567V583M754.5 551V575M784.5 551V575M820.5 551V575M946.5 559V583M948.5 551V583M951.5 567V583M976.5 559V583M988.5 551V575M1068.5 551V583M1073.5 559V583M112.5 538V551M152.5 530V545M162.5 530V567M209.5 530V567M245.5 525V551M276.5 530V551M296.5 530V551M365.5 530V545M461.5 538V559M493.5 530V551M512.5 530V551M541.5 530V545M583.5 530V567M643.5 525V551M698.5 530V551M701.5 522V538M771.5 538V551M777.5 530V551M778.5 530V551M791.5 530V567M828.5 525V551M888.5 522V538M919.5 538V551M970.5 522V538M1002.5 522V538M1042.5 530V551M1076.5 538V559" stroke="#0c12ca" stroke-width="1" fill="none"/><path d="M115 567V583M322 567V583M354 567V583M361 567V583M532 551V567M544 551V583M552 551V567M711 551V583M748 551V567M773 551V583M804 551V567M811 551V575M888 551V567M906 567V583M921 551V567M980 559V583M1013 551V567M223 530V567M227 530V567M292 525V551M360 530V551M407 525V551M432 538V551M650 530V551M789 538V551M833 530V551M974 530V551M1044 522V538M1054 530V545M1058 522V538M1071 522V538" stroke="#0c12ca" stroke-width="2" fill="none"/><path d="M235.5 551V583M278.5 551V583M646.5 551V583M776.5 551V583M807.5 567V583M186.5 530V567M189.5 538V551M216.5 530V567M380.5 538V559M1007.5 530V551M1048.5 538V559" stroke="#0c12ca" stroke-width="3" fill="none"/><path d="M119.5 551V575M135.5 567V583M177.5 551V583M217.5 567V583M227.5 551V583M241.5 559V583M248.5 559V583M254.5 567V583M295.5 551V567M329.5 551V575M369.5 551V575M443.5 551V567M448.5 551V567M471.5 551V575M485.5 551V567M489.5 567V583M528.5 551V583M578.5 551V583M605.5 567V583M616.5 551V583M650.5 559V583M653.5 551V583M664.5 551V583M696.5 551V567M792.5 551V575M794.5 551V567M824.5 551V567M855.5 551V567M875.5 551V583M881.5 551V583M899.5 551V567M924.5 559V583M983.5 567V583M998.5 551V583M1018.5 567V583M1065.5 551V583M124.5 530V551M155.5 538V559M171.5 525V551M182.5 538V551M237.5 530V545M258.5 530V567M341.5 522V538M350.5 530V551M362.5 530V551M390.5 538V551M435.5 538V551M484.5 538V559M501.5 522V538M503.5 522V538M561.5 538V551M610.5 538V559M653.5 530V551M657.5 530V545M727.5 530V551M748.5 530V545M756.5 522V538M918.5 538V551M1022.5 530V545" stroke="#0f19e1" stroke-width="1" fill="none"/><path d="M117 567V583M153 551V583M183 559V583M188 559V583M213 559V583M221 551V567M276 567V583M332 567V583M351 567V583M389 559V583M496 551V583M690 551V575M827 551V567M853 559V583M884 567V583M971 551V583M1002 551V583M1037 567V583M1061 551V575M1067 551V583M1078 551V575M106 538V559M376 538V559M574 530V545M712 530V551M855 522V538M862 530V567M879 530V551M931 538V559M988 525V551" stroke="#0f19e1" stroke-width="2" fill="none"/><path d="M109.5 551V575M174.5 567V583M383.5 551V583M422.5 559V583M538.5 551V567M767.5 551V583M786.5 551V583M932.5 551V583M966.5 551V575M1025.5 551V583M338.5 525V551M387.5 525V551M395.5 538V559M547.5 525V551M565.5 522V538M628.5 530V551M680.5 530V551M707.5 525V551M798.5 530V551M893.5 530V545M897.5 530V551M925.5 522V538M940.5 530V545" stroke="#0f19e1" stroke-width="3" fill="none"/><path d="M158.5 567V583M160.5 551V567M211.5 551V583M251.5 551V583M252.5 567V583M312.5 551V567M483.5 551V583M492.5 567V583M520.5 567V583M523.5 551V583M563.5 551V567M585.5 551V583M612.5 551V583M634.5 551V583M699.5 551V567M858.5 551V583M885.5 567V583M937.5 567V583M990.5 567V583M234.5 530V567M236.5 538V559M256.5 522V538M281.5 530V551M508.5 538V559M639.5 538V551M731.5 522V538M800.5 538V551M806.5 538V559M839.5 530V545M984.5 530V551M1012.5 530V551" stroke="#1026e7" stroke-width="1" fill="none"/><path d="M196 551V583M308 551V583M319 551V583M357 551V583M415 551V583M433 551V583M488 551V583M505 559V583M514 567V583M517 551V583M561 551V583M643 559V583M728 559V583M797 551V575M861 567V583M955 567V583M1049 567V583M373 530V551M412 538V559M426 530V567M480 530V567M543 530V551M796 530V567M875 530V551" stroke="#1026e7" stroke-width="2" fill="none"/><path d="M454.5 567V583M569.5 551V575M581.5 559V583M625.5 551V583M724.5 551V567M1005.5 551V583M193.5 530V545M202.5 538V559M318.5 538V551M529.5 530V545M613.5 530V551M901.5 530V567M915.5 530V545M1027.5 530V551" stroke="#1026e7" stroke-width="3" fill="none"/><path d="M172.5 551V575M556.5 567V583M758.5 567V583M963.5 567V583M1029.5 551V575M725.5 538V559" stroke="#1233ec" stroke-width="1" fill="none"/><path d="M192 567V583M231 551V567M285 567V583M409 559V583M567 567V583M737 567V583M816 567V583M894 551V575M263 530V545M458 530V567M686 530V551M860 530V551M865 530V551" stroke="#1233ec" stroke-width="2" fill="none"/><path d="M720.5 559V583M844.5 567V583M1009.5 559V583M157.5 530V545M251.5 530V551M578.5 530V551M619.5 538V559M759.5 522V538M869.5 530V551" stroke="#1233ec" stroke-width="3" fill="none"/><path d="M345.5 567V583M538.5 530V545" stroke="#1340f2" stroke-width="1" fill="none"/><path d="M133 551V583M272 551V583M438 551V575M872 551V567M995 551V583M1016 559V583M140 530V551M309 530V551M455 530V545M570 538V559" stroke="#1340f2" stroke-width="2" fill="none"/><path d="M598.5 551V567" stroke="#1340f2" stroke-width="3" fill="none"/><path d="M1055.5 551V567M130.5 522V538" stroke="#114ef0" stroke-width="3" fill="none"/><path d="M549.5 583V605M599.5 583V605" stroke="#0a5fe6" stroke-width="1" fill="none"/><path d="M416 583V605M558 583V605" stroke="#0a5fe6" stroke-width="2" fill="none"/><path d="M160.5 583V605M483.5 583V605M522.5 583V605M777.5 583V605M988.5 583V605M991.5 583V605M1073.5 583V605" stroke="#0370dc" stroke-width="1" fill="none"/><path d="M498 583V605M631 583V605M810 583V605" stroke="#0370dc" stroke-width="2" fill="none"/><path d="M1069.5 605V618M263.5 583V605M375.5 583V605M423.5 583V605M438.5 583V605M489.5 583V605M596.5 583V605M607.5 583V605M748.5 583V605M836.5 583V605M1018.5 583V605M1063.5 583V605" stroke="#007dd0" stroke-width="1" fill="none"/><path d="M157 583V605M333 583V605M410 583V605M451 583V605M654 583V605M900 583V605M908 583V605M917 583V605M940 583V605" stroke="#007dd0" stroke-width="2" fill="none"/><path d="M172.5 605V618M238.5 605V618M370.5 605V618M564.5 605V618M573.5 605V618M1036.5 605V618M369.5 583V605M508.5 583V605M538.5 583V605M544.5 583V605M578.5 583V605M587.5 583V605M772.5 583V605" stroke="#0087c3" stroke-width="1" fill="none"/><path d="M146 583V605M181 583V605M724 583V605M977 583V605" stroke="#0087c3" stroke-width="2" fill="none"/><path d="M137.5 605V618M381.5 605V618M399.5 605V618M543.5 605V618M642.5 605V618M659.5 605V618M687.5 605V618M788.5 605V618M818.5 605V618M967.5 605V618M1066.5 605V618M269.5 583V605M998.5 583V605" stroke="#0091b6" stroke-width="1" fill="none"/><path d="M400 583V605M603 583V605" stroke="#0091b6" stroke-width="2" fill="none"/><path d="M219.5 605V618M262.5 605V618M287.5 605V618M315.5 605V618M359.5 605V618M550.5 605V618M760.5 605V618M845.5 605V618M878.5 605V618" stroke="#039aa8" stroke-width="1" fill="none"/><path d="M818.5 618V630M96.5 605V618M183.5 605V618M321.5 605V618M457.5 605V618M621.5 605V618M783.5 605V618M950.5 605V618M986.5 605V618M983.5 583V605" stroke="#08a19a" stroke-width="1" fill="none"/><path d="M124.5 630V647M157.5 618V630M312.5 618V630M496.5 618V630M530.5 618V630M581.5 618V630M625.5 618V630M666.5 618V630M684.5 618V630" stroke="#0ca98d" stroke-width="1" fill="none"/><path d="M174.5 630V647M449.5 630V647M798.5 630V647M940.5 630V647M328.5 618V630M340.5 618V630M491.5 618V630M503.5 618V630M653.5 618V630M739.5 618V630M781.5 618V630M811.5 618V630M991.5 618V630" stroke="#11b07f" stroke-width="1" fill="none"/><path d="M132.5 630V647M169.5 630V647M212.5 630V647M270.5 630V647M290.5 630V647M336.5 630V647M468.5 630V647M757.5 630V647M930.5 630V647M1036.5 630V647M251.5 618V630M274.5 618V630M358.5 618V630M805.5 618V630M889.5 618V630" stroke="#18b772" stroke-width="1" fill="none"/><path d="M188.5 630V647M209.5 630V647M244.5 630V647M259.5 630V647M481.5 630V647M517.5 630V647M764.5 630V647M790.5 630V647M806.5 630V647M926.5 630V647M1015.5 630V647M364.5 618V630M539.5 618V630M578.5 618V630" stroke="#21bd65" stroke-width="1" fill="none"/><path d="M139.5 630V647M216.5 630V647M300.5 630V647M377.5 630V647M691.5 630V647M732.5 630V647M748.5 630V647M754.5 630V647M956.5 630V647" stroke="#29c258" stroke-width="1" fill="none"/><path d="M154.5 630V647M254.5 630V647M490.5 630V647" stroke="#32c84b" stroke-width="1" fill="none"/><path d="M216.5 647V664M270.5 647V664M377.5 647V664M405.5 630V647M405.5 647V664M490.5 647V664M748.5 647V664M754.5 647V664M798.5 647V664M930.5 647V664" stroke="#49cf3f" stroke-width="1" fill="none"/>
<path d="M95 686.5h-4M95 679.5h-4M95 674.5h-4M95 670.5h-4M95 667.5h-4M95 664.5h-4M95 661.5h-4M95 659.5h-8M95 643.5h-4M95 634.5h-4M95 627.5h-4M95 622.5h-4M95 618.5h-4M95 614.5h-4M95 611.5h-4M95 609.5h-4M95 606.5h-8M95 591.5h-4M95 581.5h-4M95 575.5h-4M95 570.5h-4M95 566.5h-4M95 562.5h-4M95 559.5h-4M95 556.5h-4M95 554.5h-8M95 538.5h-4M95 529.5h-4M95 523.5h-4M95 517.5h-4M95 513.5h-4" stroke="#1a1a1a" fill="none"/>
<text x="82.7" y="562" font-size="12" text-anchor="end" fill="#2e2e2e">10<tspan dy="-6">4</tspan></text>
<text x="82.7" y="614" font-size="12" text-anchor="end" fill="#2e2e2e">10<tspan dy="-6">3</tspan></text>
<text x="82.7" y="667" font-size="12" text-anchor="end" fill="#2e2e2e">10<tspan dy="-6">2</tspan></text>
<text transform="translate(9.3 537) scale(0.927 1)" font-size="12" text-anchor="start" fill="#2e2e2e">LEMMS Ions</text>
<text transform="translate(50 602.3) rotate(-90) scale(0.943 1)" font-size="12" text-anchor="middle" fill="#2e2e2e">Energy (keV)</text>
<rect x="1092" y="515" width="12" height="176" fill="url(#cb)"/>
<path d="M1104.5 514V691" stroke="#1a1a1a"/>
<path d="M1105 691.5h4M1105 671.5h8M1105 652.5h4M1105 632.5h8M1105 613.5h4M1105 593.5h8M1105 574.5h4M1105 554.5h8M1105 535.5h4M1105 515.5h8" stroke="#1a1a1a" fill="none"/>
<text x="1117" y="522.5" font-size="12" fill="#2e2e2e">10<tspan dy="-6">4</tspan></text>
<text x="1117" y="561.5" font-size="12" fill="#2e2e2e">10<tspan dy="-6">2</tspan></text>
<text x="1117" y="600.5" font-size="12" fill="#2e2e2e">10<tspan dy="-6">0</tspan></text>
<text x="1117" y="639.5" font-size="12" fill="#2e2e2e">10<tspan dy="-6"><tspan textLength="6.6" lengthAdjust="spacingAndGlyphs">-</tspan>2</tspan></text>
<text x="1117" y="678.5" font-size="12" fill="#2e2e2e">10<tspan dy="-6"><tspan textLength="6.6" lengthAdjust="spacingAndGlyphs">-</tspan>4</tspan></text>
<text transform="translate(1158 601.8) rotate(90) scale(0.955 1)" font-size="12" text-anchor="middle" fill="#2e2e2e">intensity 1/(s cm^2 ster keV)</text>
<rect x="95.5" y="695.5" width="985" height="15" fill="#00fb00" stroke="#1a1a1a"/>
<path d="M96 696V710" stroke="#000" stroke-width="2"/>
<text transform="translate(79 707) scale(0.897 1)" font-size="12" text-anchor="end" fill="#2e2e2e">Sunlight?</text>
<path d="M136.5 711v4M177.5 711v4M218.5 711v8M259.5 711v4M300.5 711v4M341.5 711v8M382.5 711v4M423.5 711v4M464.5 711v8M505.5 711v4M546.5 711v4M587.5 711v8M629.5 711v4M670.5 711v4M711.5 711v8M752.5 711v4M793.5 711v4M834.5 711v8M875.5 711v4M916.5 711v4M957.5 711v8M998.5 711v4M1039.5 711v4M1080.5 711v8" stroke="#1a1a1a" fill="none"/>
<path d="M136.5 220v-2M177.5 220v-2M218.5 220v-2M259.5 220v-2M300.5 220v-2M341.5 220v-2M382.5 220v-2M423.5 220v-2M464.5 220v-2M505.5 220v-2M546.5 220v-2M587.5 220v-2M629.5 220v-2M670.5 220v-2M711.5 220v-2M752.5 220v-2M793.5 220v-2M834.5 220v-2M875.5 220v-2M916.5 220v-2M957.5 220v-2M998.5 220v-2M1039.5 220v-2" stroke="#333" fill="none"/>
<path d="M136.5 416v-2M177.5 416v-2M218.5 416v-2M259.5 416v-2M300.5 416v-2M341.5 416v-2M382.5 416v-2M423.5 416v-2M464.5 416v-2M505.5 416v-2M546.5 416v-2M587.5 416v-2M629.5 416v-2M670.5 416v-2M711.5 416v-2M752.5 416v-2M793.5 416v-2M834.5 416v-2M875.5 416v-2M916.5 416v-2M957.5 416v-2M998.5 416v-2M1039.5 416v-2" stroke="#333" fill="none"/>
<path d="M136.5 508v-3M177.5 508v-3M218.5 508v-3M259.5 508v-3M300.5 508v-3M341.5 508v-3M382.5 508v-3M423.5 508v-3M464.5 508v-3M505.5 508v-3M546.5 508v-3M587.5 508v-3M629.5 508v-3M670.5 508v-3M711.5 508v-3M752.5 508v-3M793.5 508v-3M834.5 508v-3M875.5 508v-3M916.5 508v-3M957.5 508v-3M998.5 508v-3M1039.5 508v-3" stroke="#1a1a1a" fill="none"/>
<path d="M136.5 690v-2M177.5 690v-2M218.5 690v-2M259.5 690v-2M300.5 690v-2M341.5 690v-2M382.5 690v-2M423.5 690v-2M464.5 690v-2M505.5 690v-2M546.5 690v-2M587.5 690v-2M629.5 690v-2M670.5 690v-2M711.5 690v-2M752.5 690v-2M793.5 690v-2M834.5 690v-2M875.5 690v-2M916.5 690v-2M957.5 690v-2M998.5 690v-2M1039.5 690v-2" stroke="#222" fill="none"/>
<text transform="translate(218.22 734.1)" font-size="12" text-anchor="middle" fill="#2e2e2e" letter-spacing="0.18">03:00</text>
<text transform="translate(235.82 749.1)" font-size="12" text-anchor="end" fill="#2e2e2e" letter-spacing="0.18">15.77</text>
<text transform="translate(235.82 764.1)" font-size="12" text-anchor="end" fill="#2e2e2e" letter-spacing="0.18">28.14</text>
<text transform="translate(235.82 779.1)" font-size="12" text-anchor="end" fill="#2e2e2e" letter-spacing="0.18">165.87</text>
<text transform="translate(341.34000000000003 734.1)" font-size="12" text-anchor="middle" fill="#2e2e2e" letter-spacing="0.18">06:00</text>
<text transform="translate(358.94 749.1)" font-size="12" text-anchor="end" fill="#2e2e2e" letter-spacing="0.18">15.92</text>
<text transform="translate(358.94 764.1)" font-size="12" text-anchor="end" fill="#2e2e2e" letter-spacing="0.18">28.03</text>
<text transform="translate(358.94 779.1)" font-size="12" text-anchor="end" fill="#2e2e2e" letter-spacing="0.18">173.48</text>
<text transform="translate(464.46000000000004 734.1)" font-size="12" text-anchor="middle" fill="#2e2e2e" letter-spacing="0.18">09:00</text>
<text transform="translate(482.06 749.1)" font-size="12" text-anchor="end" fill="#2e2e2e" letter-spacing="0.18">16.08</text>
<text transform="translate(482.06 764.1)" font-size="12" text-anchor="end" fill="#2e2e2e" letter-spacing="0.18">27.91</text>
<text transform="translate(482.06 779.1)" font-size="12" text-anchor="end" fill="#2e2e2e" letter-spacing="0.18">181.16</text>
<text transform="translate(587.58 734.1)" font-size="12" text-anchor="middle" fill="#2e2e2e" letter-spacing="0.18">12:00</text>
<text transform="translate(605.1800000000001 749.1)" font-size="12" text-anchor="end" fill="#2e2e2e" letter-spacing="0.18">16.25</text>
<text transform="translate(605.1800000000001 764.1)" font-size="12" text-anchor="end" fill="#2e2e2e" letter-spacing="0.18">27.78</text>
<text transform="translate(605.1800000000001 779.1)" font-size="12" text-anchor="end" fill="#2e2e2e" letter-spacing="0.18">188.80</text>
<text transform="translate(710.7 734.1)" font-size="12" text-anchor="middle" fill="#2e2e2e" letter-spacing="0.18">15:00</text>
<text transform="translate(728.3000000000001 749.1)" font-size="12" text-anchor="end" fill="#2e2e2e" letter-spacing="0.18">16.43</text>
<text transform="translate(728.3000000000001 764.1)" font-size="12" text-anchor="end" fill="#2e2e2e" letter-spacing="0.18">27.62</text>
<text transform="translate(728.3000000000001 779.1)" font-size="12" text-anchor="end" fill="#2e2e2e" letter-spacing="0.18">196.26</text>
<text transform="translate(833.82 734.1)" font-size="12" text-anchor="middle" fill="#2e2e2e" letter-spacing="0.18">18:00</text>
<text transform="translate(851.4200000000001 749.1)" font-size="12" text-anchor="end" fill="#2e2e2e" letter-spacing="0.18">16.62</text>
<text transform="translate(851.4200000000001 764.1)" font-size="12" text-anchor="end" fill="#2e2e2e" letter-spacing="0.18">27.46</text>
<text transform="translate(851.4200000000001 779.1)" font-size="12" text-anchor="end" fill="#2e2e2e" letter-spacing="0.18">203.40</text>
<text transform="translate(956.94 734.1)" font-size="12" text-anchor="middle" fill="#2e2e2e" letter-spacing="0.18">21:00</text>
<text transform="translate(974.5400000000001 749.1)" font-size="12" text-anchor="end" fill="#2e2e2e" letter-spacing="0.18">16.82</text>
<text transform="translate(974.5400000000001 764.1)" font-size="12" text-anchor="end" fill="#2e2e2e" letter-spacing="0.18">27.28</text>
<text transform="translate(974.5400000000001 779.1)" font-size="12" text-anchor="end" fill="#2e2e2e" letter-spacing="0.18">210.02</text>
<text transform="translate(1080.06 734.1)" font-size="12" text-anchor="middle" fill="#2e2e2e" letter-spacing="0.18">00:00</text>
<text transform="translate(1097.66 749.1)" font-size="12" text-anchor="end" fill="#2e2e2e" letter-spacing="0.18">17.03</text>
<text transform="translate(1097.66 764.1)" font-size="12" text-anchor="end" fill="#2e2e2e" letter-spacing="0.18">27.08</text>
<text transform="translate(1097.66 779.1)" font-size="12" text-anchor="end" fill="#2e2e2e" letter-spacing="0.18">215.91</text>
<text transform="translate(59.8 749.1)" font-size="12" text-anchor="end" fill="#2e2e2e">LT (hrs)</text>
<text transform="translate(59.8 764.1)" font-size="12" text-anchor="end" fill="#2e2e2e">Rs</text>
<text transform="translate(60.2 779.1) scale(0.96 1)" font-size="12" text-anchor="end" fill="#2e2e2e">Dipole L</text>
<text transform="translate(1062.5 746) scale(1.02 1)" font-size="12" text-anchor="start" fill="#2e2e2e">2013<tspan textLength="6.6" lengthAdjust="spacingAndGlyphs">-</tspan>014</text>
<text transform="translate(202.5 807.5)" font-size="12" text-anchor="end" fill="#2e2e2e"><tspan textLength="6.6" lengthAdjust="spacingAndGlyphs">-</tspan>40.</text>
<text transform="translate(202.5 826.5)" font-size="12" text-anchor="end" fill="#2e2e2e"><tspan textLength="6.6" lengthAdjust="spacingAndGlyphs">-</tspan>30.</text>
<text transform="translate(202.5 844.5)" font-size="12" text-anchor="end" fill="#2e2e2e"><tspan textLength="6.6" lengthAdjust="spacingAndGlyphs">-</tspan>20.</text>
<text transform="translate(202.5 862.5)" font-size="12" text-anchor="end" fill="#2e2e2e"><tspan textLength="6.6" lengthAdjust="spacingAndGlyphs">-</tspan>10.</text>
<text transform="translate(202.5 881.5)" font-size="12" text-anchor="end" fill="#2e2e2e" letter-spacing="0.18">0.</text>
<text transform="translate(202.5 899.5)" font-size="12" text-anchor="end" fill="#2e2e2e" letter-spacing="0.18">10.</text>
<text transform="translate(202.5 917.5)" font-size="12" text-anchor="end" fill="#2e2e2e" letter-spacing="0.18">20.</text>
<text transform="translate(202.5 936.5)" font-size="12" text-anchor="end" fill="#2e2e2e" letter-spacing="0.18">30.</text>
<text transform="translate(202.5 954.5)" font-size="12" text-anchor="end" fill="#2e2e2e" letter-spacing="0.18">40.</text>
<text transform="translate(216.8 973)" font-size="12" text-anchor="middle" fill="#2e2e2e" letter-spacing="0.18">40.</text>
<text transform="translate(254.26000000000002 973)" font-size="12" text-anchor="middle" fill="#2e2e2e" letter-spacing="0.18">20.</text>
<text transform="translate(291.72 973)" font-size="12" text-anchor="middle" fill="#2e2e2e" letter-spacing="0.18">0.</text>
<text transform="translate(329.18 973)" font-size="12" text-anchor="middle" fill="#2e2e2e"><tspan textLength="6.6" lengthAdjust="spacingAndGlyphs">-</tspan>20.</text>
<text transform="translate(366.64000000000004 973)" font-size="12" text-anchor="middle" fill="#2e2e2e"><tspan textLength="6.6" lengthAdjust="spacingAndGlyphs">-</tspan>40.</text>
<text transform="translate(290.5 992) scale(0.945 1)" font-size="12" text-anchor="middle" fill="#2e2e2e">KSM<tspan textLength="6.6" lengthAdjust="spacingAndGlyphs">-</tspan>X</text>
<text transform="translate(167.1 876.5) rotate(-90) scale(0.945 1)" font-size="12" text-anchor="middle" fill="#2e2e2e">KSM<tspan textLength="6.6" lengthAdjust="spacingAndGlyphs">-</tspan>Y</text>
<text transform="translate(496.5 807.5)" font-size="12" text-anchor="end" fill="#2e2e2e" letter-spacing="0.18">40.</text>
<text transform="translate(496.5 826.5)" font-size="12" text-anchor="end" fill="#2e2e2e" letter-spacing="0.18">30.</text>
<text transform="translate(496.5 844.5)" font-size="12" text-anchor="end" fill="#2e2e2e" letter-spacing="0.18">20.</text>
<text transform="translate(496.5 862.5)" font-size="12" text-anchor="end" fill="#2e2e2e" letter-spacing="0.18">10.</text>
<text transform="translate(496.5 881.5)" font-size="12" text-anchor="end" fill="#2e2e2e" letter-spacing="0.18">0.</text>
<text transform="translate(496.5 899.5)" font-size="12" text-anchor="end" fill="#2e2e2e"><tspan textLength="6.6" lengthAdjust="spacingAndGlyphs">-</tspan>10.</text>
<text transform="translate(496.5 917.5)" font-size="12" text-anchor="end" fill="#2e2e2e"><tspan textLength="6.6" lengthAdjust="spacingAndGlyphs">-</tspan>20.</text>
<text transform="translate(496.5 936.5)" font-size="12" text-anchor="end" fill="#2e2e2e"><tspan textLength="6.6" lengthAdjust="spacingAndGlyphs">-</tspan>30.</text>
<text transform="translate(496.5 954.5)" font-size="12" text-anchor="end" fill="#2e2e2e"><tspan textLength="6.6" lengthAdjust="spacingAndGlyphs">-</tspan>40.</text>
<text transform="translate(510.8 973)" font-size="12" text-anchor="middle" fill="#2e2e2e" letter-spacing="0.18">40.</text>
<text transform="translate(548.26 973)" font-size="12" text-anchor="middle" fill="#2e2e2e" letter-spacing="0.18">20.</text>
<text transform="translate(585.7199999999999 973)" font-size="12" text-anchor="middle" fill="#2e2e2e" letter-spacing="0.18">0.</text>
<text transform="translate(623.18 973)" font-size="12" text-anchor="middle" fill="#2e2e2e"><tspan textLength="6.6" lengthAdjust="spacingAndGlyphs">-</tspan>20.</text>
<text transform="translate(660.64 973)" font-size="12" text-anchor="middle" fill="#2e2e2e"><tspan textLength="6.6" lengthAdjust="spacingAndGlyphs">-</tspan>40.</text>
<text transform="translate(584.5 992) scale(0.945 1)" font-size="12" text-anchor="middle" fill="#2e2e2e">KSM<tspan textLength="6.6" lengthAdjust="spacingAndGlyphs">-</tspan>X</text>
<text transform="translate(461.1 876.5) rotate(-90) scale(0.945 1)" font-size="12" text-anchor="middle" fill="#2e2e2e">KSM<tspan textLength="6.6" lengthAdjust="spacingAndGlyphs">-</tspan>Z</text>
<text transform="translate(790.5 807.5)" font-size="12" text-anchor="end" fill="#2e2e2e" letter-spacing="0.18">40.</text>
<text transform="translate(790.5 826.5)" font-size="12" text-anchor="end" fill="#2e2e2e" letter-spacing="0.18">30.</text>
<text transform="translate(790.5 844.5)" font-size="12" text-anchor="end" fill="#2e2e2e" letter-spacing="0.18">20.</text>
<text transform="translate(790.5 862.5)" font-size="12" text-anchor="end" fill="#2e2e2e" letter-spacing="0.18">10.</text>
<text transform="translate(790.5 881.5)" font-size="12" text-anchor="end" fill="#2e2e2e" letter-spacing="0.18">0.</text>
<text transform="translate(790.5 899.5)" font-size="12" text-anchor="end" fill="#2e2e2e"><tspan textLength="6.6" lengthAdjust="spacingAndGlyphs">-</tspan>10.</text>
<text transform="translate(790.5 917.5)" font-size="12" text-anchor="end" fill="#2e2e2e"><tspan textLength="6.6" lengthAdjust="spacingAndGlyphs">-</tspan>20.</text>
<text transform="translate(790.5 936.5)" font-size="12" text-anchor="end" fill="#2e2e2e"><tspan textLength="6.6" lengthAdjust="spacingAndGlyphs">-</tspan>30.</text>
<text transform="translate(790.5 954.5)" font-size="12" text-anchor="end" fill="#2e2e2e"><tspan textLength="6.6" lengthAdjust="spacingAndGlyphs">-</tspan>40.</text>
<text transform="translate(804.8 973)" font-size="12" text-anchor="middle" fill="#2e2e2e"><tspan textLength="6.6" lengthAdjust="spacingAndGlyphs">-</tspan>40.</text>
<text transform="translate(842.26 973)" font-size="12" text-anchor="middle" fill="#2e2e2e"><tspan textLength="6.6" lengthAdjust="spacingAndGlyphs">-</tspan>20.</text>
<text transform="translate(879.7199999999999 973)" font-size="12" text-anchor="middle" fill="#2e2e2e" letter-spacing="0.18">0.</text>
<text transform="translate(917.18 973)" font-size="12" text-anchor="middle" fill="#2e2e2e" letter-spacing="0.18">20.</text>
<text transform="translate(954.64 973)" font-size="12" text-anchor="middle" fill="#2e2e2e" letter-spacing="0.18">40.</text>
<text transform="translate(878.5 992) scale(0.945 1)" font-size="12" text-anchor="middle" fill="#2e2e2e">KSM<tspan textLength="6.6" lengthAdjust="spacingAndGlyphs">-</tspan>Y</text>
<text transform="translate(755.1 876.5) rotate(-90) scale(0.945 1)" font-size="12" text-anchor="middle" fill="#2e2e2e">KSM<tspan textLength="6.6" lengthAdjust="spacingAndGlyphs">-</tspan>Z</text>
<rect x="215.5" y="802.5" width="151" height="148.0" fill="#fff" stroke="#1a1a1a"/><path d="M215.0 803.5h-8M215.0 805.5h-4M215.0 806.5h-4M215.0 808.5h-4M215.0 810.5h-4M215.0 812.5h-4M215.0 814.5h-4M215.0 816.5h-4M215.0 817.5h-4M215.0 819.5h-4M215.0 821.5h-8M215.0 823.5h-4M215.0 825.5h-4M215.0 827.5h-4M215.0 828.5h-4M215.0 830.5h-4M215.0 832.5h-4M215.0 834.5h-4M215.0 836.5h-4M215.0 838.5h-4M215.0 839.5h-8M215.0 841.5h-4M215.0 843.5h-4M215.0 845.5h-4M215.0 847.5h-4M215.0 849.5h-4M215.0 850.5h-4M215.0 852.5h-4M215.0 854.5h-4M215.0 856.5h-4M215.0 858.5h-8M215.0 860.5h-4M215.0 861.5h-4M215.0 863.5h-4M215.0 865.5h-4M215.0 867.5h-4M215.0 869.5h-4M215.0 871.5h-4M215.0 872.5h-4M215.0 874.5h-4M215.0 876.5h-8M215.0 878.5h-4M215.0 880.5h-4M215.0 882.5h-4M215.0 883.5h-4M215.0 885.5h-4M215.0 887.5h-4M215.0 889.5h-4M215.0 891.5h-4M215.0 893.5h-4M215.0 895.5h-8M215.0 896.5h-4M215.0 898.5h-4M215.0 900.5h-4M215.0 902.5h-4M215.0 904.5h-4M215.0 906.5h-4M215.0 907.5h-4M215.0 909.5h-4M215.0 911.5h-4M215.0 913.5h-8M215.0 915.5h-4M215.0 917.5h-4M215.0 918.5h-4M215.0 920.5h-4M215.0 922.5h-4M215.0 924.5h-4M215.0 926.5h-4M215.0 928.5h-4M215.0 929.5h-4M215.0 931.5h-8M215.0 933.5h-4M215.0 935.5h-4M215.0 937.5h-4M215.0 939.5h-4M215.0 940.5h-4M215.0 942.5h-4M215.0 944.5h-4M215.0 946.5h-4M215.0 948.5h-4M215.0 950.5h-8" stroke="#1a1a1a" fill="none"/><path d="M216.5 950.5v8M235.5 950.5v4M253.5 950.5v8M272.5 950.5v4M291.5 950.5v8M310.5 950.5v4M328.5 950.5v8M347.5 950.5v4M366.5 950.5v8" stroke="#1a1a1a" fill="none"/><clipPath id="o1"><rect x="216.0" y="803.0" width="150" height="147.0"/></clipPath><g clip-path="url(#o1)"><path d="M248.5 803.3C247.9 804.3 245.9 807.4 244.7 809.4C243.5 811.4 242.4 813.5 241.3 815.5C240.2 817.5 239.1 819.6 238.2 821.6C237.2 823.6 236.2 825.7 235.4 827.7C234.5 829.7 233.7 831.8 232.9 833.8C232.2 835.8 231.4 837.9 230.8 839.9C230.1 841.9 229.5 844.0 229.0 846.0C228.5 848.0 228.0 850.1 227.5 852.1C227.1 854.1 226.7 856.2 226.4 858.2C226.1 860.2 225.8 862.3 225.6 864.3C225.4 866.3 225.2 868.4 225.1 870.4C225.0 872.4 225.0 874.5 225.0 876.5C225.0 878.5 225.1 880.6 225.2 882.6C225.3 884.6 225.5 886.7 225.7 888.7C225.9 890.7 226.2 892.8 226.6 894.8C226.9 896.8 227.3 898.9 227.8 900.9C228.2 902.9 228.7 905.0 229.3 907.0C229.8 909.0 230.5 911.1 231.1 913.1C231.8 915.1 232.5 917.2 233.3 919.2C234.1 921.2 234.9 923.3 235.8 925.3C236.7 927.3 237.6 929.4 238.6 931.4C239.7 933.4 240.7 935.5 241.8 937.5C242.9 939.5 244.1 941.6 245.3 943.6C246.5 945.6 248.5 948.7 249.2 949.7" fill="none" stroke="#0a0aff" stroke-width="1.05" stroke-dasharray="2.6 2" shape-rendering="auto"/><path d="M283.7 803.3C282.5 804.3 279.1 807.4 277.0 809.4C274.9 811.4 272.9 813.5 270.9 815.5C269.0 817.5 267.2 819.6 265.5 821.6C263.7 823.6 262.1 825.7 260.6 827.7C259.0 829.7 257.6 831.8 256.2 833.8C254.9 835.8 253.6 837.9 252.5 839.9C251.3 841.9 250.3 844.0 249.3 846.0C248.4 848.0 247.5 850.1 246.8 852.1C246.0 854.1 245.3 856.2 244.8 858.2C244.2 860.2 243.7 862.3 243.4 864.3C243.0 866.3 242.7 868.4 242.5 870.4C242.4 872.4 242.3 874.5 242.3 876.5C242.3 878.5 242.4 880.6 242.6 882.6C242.9 884.6 243.2 886.7 243.6 888.7C244.0 890.7 244.5 892.8 245.1 894.8C245.7 896.8 246.4 898.9 247.2 900.9C247.9 902.9 248.8 905.0 249.8 907.0C250.8 909.0 251.9 911.1 253.1 913.1C254.3 915.1 255.5 917.2 256.9 919.2C258.3 921.2 259.8 923.3 261.3 925.3C262.9 927.3 264.6 929.4 266.3 931.4C268.1 933.4 269.9 935.5 271.9 937.5C273.9 939.5 275.9 941.6 278.1 943.6C280.2 945.6 283.7 948.7 284.8 949.7" fill="none" stroke="#6e3c10" stroke-width="1.05" stroke-dasharray="2.6 2" shape-rendering="auto"/></g><ellipse cx="292.2" cy="877.5" rx="36.5" ry="37.6" fill="none" stroke="#000" stroke-width="1.3" shape-rendering="auto"/><path d="M312.2 880.0C312.3 881.0 312.8 883.8 312.6 886.0C312.4 888.2 312.0 890.7 311.0 893.0C310.0 895.3 308.3 897.9 306.5 900.0C304.7 902.1 302.5 904.0 300.0 905.5C297.5 907.0 294.2 908.1 291.5 908.8C288.8 909.5 286.8 909.6 284.0 909.6C281.2 909.6 278.0 909.2 275.0 908.5C272.0 907.8 268.6 906.8 266.0 905.5C263.4 904.2 261.1 902.3 259.5 900.5C257.9 898.7 256.8 895.8 256.3 894.8" fill="none" stroke="#000" stroke-width="1.3" shape-rendering="auto"/><ellipse cx="291.6" cy="876.7" rx="1.8" ry="1.3" fill="none" stroke="#000" stroke-width="0.9" shape-rendering="auto"/><path d="M278.5 909.6L288 908.8" stroke="#0000ff" stroke-width="4.2" stroke-linecap="round" shape-rendering="auto"/><path d="M273.6 905.4L281.6 913.4M273.6 913.4L281.6 905.4" stroke="#ff2020" stroke-width="1" fill="none" shape-rendering="auto"/><circle cx="266.5" cy="851.3" r="2.3" fill="#ff0000" shape-rendering="auto"/><rect x="509.5" y="802.5" width="151" height="148.0" fill="#fff" stroke="#1a1a1a"/><path d="M509.0 803.5h-8M509.0 805.5h-4M509.0 806.5h-4M509.0 808.5h-4M509.0 810.5h-4M509.0 812.5h-4M509.0 814.5h-4M509.0 816.5h-4M509.0 817.5h-4M509.0 819.5h-4M509.0 821.5h-8M509.0 823.5h-4M509.0 825.5h-4M509.0 827.5h-4M509.0 828.5h-4M509.0 830.5h-4M509.0 832.5h-4M509.0 834.5h-4M509.0 836.5h-4M509.0 838.5h-4M509.0 839.5h-8M509.0 841.5h-4M509.0 843.5h-4M509.0 845.5h-4M509.0 847.5h-4M509.0 849.5h-4M509.0 850.5h-4M509.0 852.5h-4M509.0 854.5h-4M509.0 856.5h-4M509.0 858.5h-8M509.0 860.5h-4M509.0 861.5h-4M509.0 863.5h-4M509.0 865.5h-4M509.0 867.5h-4M509.0 869.5h-4M509.0 871.5h-4M509.0 872.5h-4M509.0 874.5h-4M509.0 876.5h-8M509.0 878.5h-4M509.0 880.5h-4M509.0 882.5h-4M509.0 883.5h-4M509.0 885.5h-4M509.0 887.5h-4M509.0 889.5h-4M509.0 891.5h-4M509.0 893.5h-4M509.0 895.5h-8M509.0 896.5h-4M509.0 898.5h-4M509.0 900.5h-4M509.0 902.5h-4M509.0 904.5h-4M509.0 906.5h-4M509.0 907.5h-4M509.0 909.5h-4M509.0 911.5h-4M509.0 913.5h-8M509.0 915.5h-4M509.0 917.5h-4M509.0 918.5h-4M509.0 920.5h-4M509.0 922.5h-4M509.0 924.5h-4M509.0 926.5h-4M509.0 928.5h-4M509.0 929.5h-4M509.0 931.5h-8M509.0 933.5h-4M509.0 935.5h-4M509.0 937.5h-4M509.0 939.5h-4M509.0 940.5h-4M509.0 942.5h-4M509.0 944.5h-4M509.0 946.5h-4M509.0 948.5h-4M509.0 950.5h-8" stroke="#1a1a1a" fill="none"/><path d="M510.5 950.5v8M529.5 950.5v4M547.5 950.5v8M566.5 950.5v4M585.5 950.5v8M604.5 950.5v4M622.5 950.5v8M641.5 950.5v4M660.5 950.5v8" stroke="#1a1a1a" fill="none"/><clipPath id="o2"><rect x="510.0" y="803.0" width="150" height="147.0"/></clipPath><g clip-path="url(#o2)"><path d="M543.0 803.3C542.4 804.3 540.4 807.4 539.2 809.4C538.0 811.4 536.8 813.5 535.7 815.5C534.6 817.5 533.5 819.6 532.5 821.6C531.5 823.6 530.6 825.7 529.7 827.7C528.8 829.7 528.0 831.8 527.2 833.8C526.4 835.8 525.7 837.9 525.1 839.9C524.4 841.9 523.8 844.0 523.3 846.0C522.7 848.0 522.2 850.1 521.8 852.1C521.3 854.1 521.0 856.2 520.6 858.2C520.3 860.2 520.0 862.3 519.8 864.3C519.6 866.3 519.4 868.4 519.3 870.4C519.2 872.4 519.2 874.5 519.2 876.5C519.2 878.5 519.3 880.6 519.4 882.6C519.5 884.6 519.7 886.7 519.9 888.7C520.2 890.7 520.4 892.8 520.8 894.8C521.1 896.8 521.5 898.9 522.0 900.9C522.4 902.9 523.0 905.0 523.5 907.0C524.1 909.0 524.7 911.1 525.4 913.1C526.1 915.1 526.8 917.2 527.6 919.2C528.4 921.2 529.2 923.3 530.1 925.3C531.0 927.3 532.0 929.4 533.0 931.4C534.0 933.4 535.1 935.5 536.2 937.5C537.4 939.5 538.5 941.6 539.8 943.6C541.0 945.6 543.0 948.7 543.7 949.7" fill="none" stroke="#0a0aff" stroke-width="1.05" stroke-dasharray="2.6 2" shape-rendering="auto"/><path d="M576.7 803.3C575.6 804.3 572.2 807.4 570.2 809.4C568.1 811.4 566.1 813.5 564.2 815.5C562.3 817.5 560.6 819.6 558.9 821.6C557.2 823.6 555.6 825.7 554.1 827.7C552.6 829.7 551.1 831.8 549.8 833.8C548.5 835.8 547.3 837.9 546.2 839.9C545.1 841.9 544.0 844.0 543.1 846.0C542.2 848.0 541.3 850.1 540.6 852.1C539.8 854.1 539.2 856.2 538.6 858.2C538.1 860.2 537.6 862.3 537.2 864.3C536.9 866.3 536.6 868.4 536.4 870.4C536.3 872.4 536.2 874.5 536.2 876.5C536.2 878.5 536.3 880.6 536.5 882.6C536.7 884.6 537.0 886.7 537.4 888.7C537.8 890.7 538.3 892.8 538.9 894.8C539.5 896.8 540.2 898.9 540.9 900.9C541.7 902.9 542.6 905.0 543.6 907.0C544.5 909.0 545.6 911.1 546.7 913.1C547.9 915.1 549.1 917.2 550.5 919.2C551.8 921.2 553.3 923.3 554.8 925.3C556.3 927.3 558.0 929.4 559.7 931.4C561.4 933.4 563.2 935.5 565.2 937.5C567.1 939.5 569.1 941.6 571.2 943.6C573.3 945.6 576.7 948.7 577.8 949.7" fill="none" stroke="#6e3c10" stroke-width="1.05" stroke-dasharray="2.6 2" shape-rendering="auto"/></g><path d="M549 887.4L622.9 866" stroke="#000" stroke-width="1.8" shape-rendering="auto"/><ellipse cx="585.8" cy="876.5" rx="2" ry="1.2" fill="none" stroke="#000" stroke-width="0.9" shape-rendering="auto"/><path d="M550.3 894.0C550.5 894.8 550.8 897.3 551.5 899.0C552.2 900.7 553.2 902.4 554.5 904.0C555.8 905.6 557.6 907.3 559.5 908.7C561.4 910.1 563.8 911.3 566.0 912.2C568.2 913.1 570.7 913.8 573.0 914.2C575.3 914.6 577.5 914.8 580.0 914.6C582.5 914.5 585.5 914.1 588.0 913.3C590.5 912.5 592.8 911.4 595.0 910.0C597.2 908.6 599.4 906.8 601.0 905.0C602.6 903.2 603.9 901.3 604.8 899.5C605.7 897.7 606.0 895.9 606.3 894.0C606.6 892.1 606.5 890.0 606.5 888.0C606.5 886.0 606.4 883.2 606.4 882.3" fill="none" stroke="#000" stroke-width="1.3" shape-rendering="auto"/><path d="M606.5 882.3h-1.5" stroke="#000" stroke-width="1" shape-rendering="auto"/><path d="M573 914.5L581 914.5" stroke="#0000ff" stroke-width="4.2" stroke-linecap="round" shape-rendering="auto"/><path d="M567.5 910.1L575.5 918.1M567.5 918.1L575.5 910.1" stroke="#ff2020" stroke-width="1" fill="none" shape-rendering="auto"/><circle cx="560.6" cy="884.6" r="2.3" fill="#ff0000" shape-rendering="auto"/><rect x="803.5" y="802.5" width="151" height="148.0" fill="#fff" stroke="#1a1a1a"/><path d="M803.0 803.5h-8M803.0 805.5h-4M803.0 806.5h-4M803.0 808.5h-4M803.0 810.5h-4M803.0 812.5h-4M803.0 814.5h-4M803.0 816.5h-4M803.0 817.5h-4M803.0 819.5h-4M803.0 821.5h-8M803.0 823.5h-4M803.0 825.5h-4M803.0 827.5h-4M803.0 828.5h-4M803.0 830.5h-4M803.0 832.5h-4M803.0 834.5h-4M803.0 836.5h-4M803.0 838.5h-4M803.0 839.5h-8M803.0 841.5h-4M803.0 843.5h-4M803.0 845.5h-4M803.0 847.5h-4M803.0 849.5h-4M803.0 850.5h-4M803.0 852.5h-4M803.0 854.5h-4M803.0 856.5h-4M803.0 858.5h-8M803.0 860.5h-4M803.0 861.5h-4M803.0 863.5h-4M803.0 865.5h-4M803.0 867.5h-4M803.0 869.5h-4M803.0 871.5h-4M803.0 872.5h-4M803.0 874.5h-4M803.0 876.5h-8M803.0 878.5h-4M803.0 880.5h-4M803.0 882.5h-4M803.0 883.5h-4M803.0 885.5h-4M803.0 887.5h-4M803.0 889.5h-4M803.0 891.5h-4M803.0 893.5h-4M803.0 895.5h-8M803.0 896.5h-4M803.0 898.5h-4M803.0 900.5h-4M803.0 902.5h-4M803.0 904.5h-4M803.0 906.5h-4M803.0 907.5h-4M803.0 909.5h-4M803.0 911.5h-4M803.0 913.5h-8M803.0 915.5h-4M803.0 917.5h-4M803.0 918.5h-4M803.0 920.5h-4M803.0 922.5h-4M803.0 924.5h-4M803.0 926.5h-4M803.0 928.5h-4M803.0 929.5h-4M803.0 931.5h-8M803.0 933.5h-4M803.0 935.5h-4M803.0 937.5h-4M803.0 939.5h-4M803.0 940.5h-4M803.0 942.5h-4M803.0 944.5h-4M803.0 946.5h-4M803.0 948.5h-4M803.0 950.5h-8" stroke="#1a1a1a" fill="none"/><path d="M804.5 950.5v8M823.5 950.5v4M841.5 950.5v8M860.5 950.5v4M879.5 950.5v8M898.5 950.5v4M916.5 950.5v8M935.5 950.5v4M954.5 950.5v8" stroke="#1a1a1a" fill="none"/><ellipse cx="879.1" cy="876.6" rx="74.3" ry="73.4" fill="none" stroke="#6e3c10" stroke-width="1.05" stroke-dasharray="2.6 2" shape-rendering="auto"/><ellipse cx="880.6" cy="876.7" rx="38.1" ry="10.7" fill="none" stroke="#000" stroke-width="1.3" transform="rotate(-1 880.6 876.7)" shape-rendering="auto"/><path d="M872.5 865.9h18" stroke="#000" stroke-width="1.4" shape-rendering="auto"/><ellipse cx="879.1" cy="876.7" rx="1.8" ry="1.3" fill="none" stroke="#000" stroke-width="0.9" shape-rendering="auto"/><path d="M882.4 882.1L912.5 913.6M898.1 894.5L912.6 912.6" stroke="#000" stroke-width="1.2" fill="none" shape-rendering="auto"/><rect x="910.2" y="911.6" width="5.6" height="4.8" fill="#0000e0"/><path d="M909 910L917 918M909 918L917 910" stroke="#ff2020" stroke-width="1" fill="none" shape-rendering="auto"/><circle cx="853.2" cy="884.6" r="2.3" fill="#ff0000" shape-rendering="auto"/>
</svg></body></html>
